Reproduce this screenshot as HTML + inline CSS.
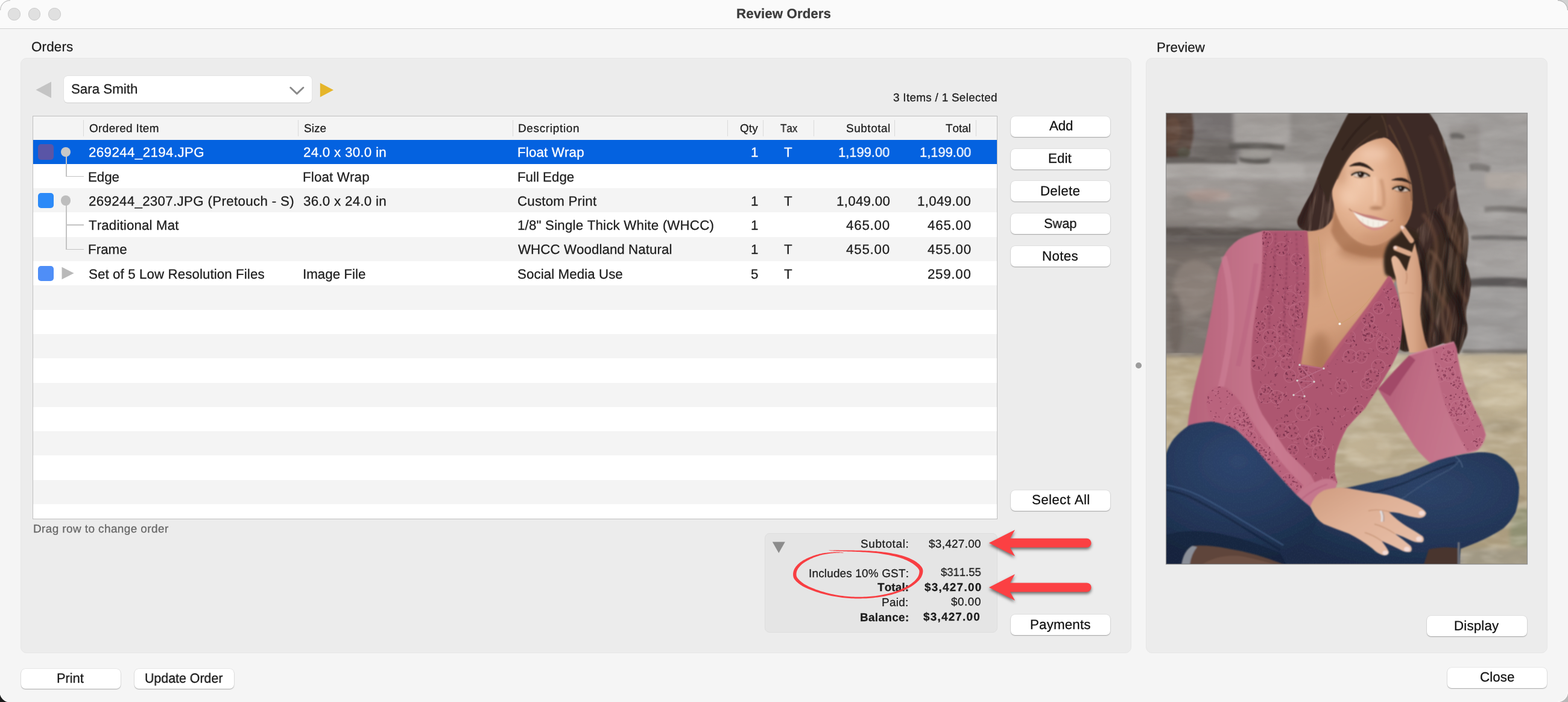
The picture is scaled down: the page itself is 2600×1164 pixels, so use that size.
<!DOCTYPE html>
<html lang="en">
<head>
<meta charset="utf-8">
<title>Review Orders</title>
<style>
html,body{margin:0;padding:0;}
body{width:2600px;height:1164px;background:#f5f5f5;font-family:"Liberation Sans",sans-serif;color:#1d1d1d;}
#win{position:relative;width:2600px;height:1164px;overflow:hidden;background:#f5f5f5;}
.b{position:absolute;box-sizing:border-box;}
.t{position:absolute;white-space:pre;line-height:30px;transform-origin:0 0;will-change:transform;text-rendering:geometricPrecision;font-kerning:none;-webkit-text-stroke:0.28px currentColor;}
.titlebar{background:#fafafa;border-bottom:1px solid #d2d2d2;}
.tl{border-radius:50%;background:#e0e0e0;border:1px solid #c9c9c9;}
.group{background:#ececec;border:1px solid #e6e6e6;border-radius:10px;}
.btn{background:#fff;border-radius:7px;box-shadow:0 0 0 0.5px rgba(0,0,0,0.10),0 1px 1.5px rgba(0,0,0,0.28);}
.combo{background:#fff;border-radius:6px;box-shadow:0 0 0 0.5px rgba(0,0,0,0.05),0 0.5px 1px rgba(0,0,0,0.10);}
.table{background:#fff;border:1px solid #bfbfbf;}
.hdr{background:#f4f4f4;}
.sep{background:#dadada;}
.alt{background:#f4f4f4;}
.sel{background:#0462e0;}
.sq{border-radius:5px;}
.dot{border-radius:50%;background:#bdbdbd;}
.ln{background:#c3c3c3;}
.sum{background:#e5e5e5;border:1px solid #dedede;border-radius:8px;}
svg{position:absolute;overflow:visible;}

</style>
</head>
<body>
<div id="win">
<header aria-label="Title bar">
<div class="b titlebar" style="left:0.00px;top:0.00px;width:2600.00px;height:48.00px;"></div>
<div class="b tl" style="left:13.20px;top:13.20px;width:20.40px;height:20.40px;"></div>
<div class="b tl" style="left:46.80px;top:13.20px;width:20.40px;height:20.40px;"></div>
<div class="b tl" style="left:80.40px;top:13.20px;width:20.40px;height:20.40px;"></div>
<div class="t" style="left:1220.81px;top:8px;font-size:22.30px;letter-spacing:0.069px;font-weight:700;color:#3b3b3b;">Review Orders</div>
</header>
<section aria-label="Orders">
<div class="t" style="left:51.94px;top:63px;font-size:22.30px;letter-spacing:0.202px;">Orders</div>
<div class="b group" style="left:33.90px;top:96.10px;width:1842.10px;height:987.00px;"></div>
<nav aria-label="Customer">
<svg style="left:59px;top:135px" width="27" height="29" viewBox="0 0 27 29"><path d="M26 0.6 L26 27.5 L0.4 14 Z" fill="#c4c4c4"/></svg>
<div class="b combo" style="left:105.50px;top:125.80px;width:411.90px;height:44.40px;"></div>
<div class="t" style="left:117.69px;top:133px;font-size:22.30px;">Sara Smith</div>
<svg style="left:478px;top:141px" width="30" height="20" viewBox="0 0 30 20"><path d="M3.700 4.200 L14.300 14.400 L24.900 4.200" fill="none" stroke="#8a8a8a" stroke-width="2.900" stroke-linecap="round" stroke-linejoin="round"/></svg>
<svg style="left:530px;top:137px" width="24" height="25" viewBox="0 0 24 25"><path d="M0.8 0.4 L23 12.2 L0.8 24 Z" fill="#e5b52a"/></svg>
</nav>
<div class="t" style="left:1481.48px;top:148px;font-size:18.90px;letter-spacing:0.295px;">3 Items / 1 Selected</div>
<div role="table" aria-label="Ordered items">
<div class="b table" style="left:54.00px;top:192.00px;width:1600.00px;height:669.00px;"></div>
<div class="b hdr" style="left:55.00px;top:193.00px;width:1598.00px;height:38.60px;"></div>
<div class="b sep" style="left:138.20px;top:199.20px;width:1.20px;height:27.20px;"></div>
<div class="b sep" style="left:494.20px;top:199.20px;width:1.20px;height:27.20px;"></div>
<div class="b sep" style="left:850.10px;top:199.20px;width:1.20px;height:27.20px;"></div>
<div class="b sep" style="left:1206.20px;top:199.20px;width:1.20px;height:27.20px;"></div>
<div class="b sep" style="left:1265.20px;top:199.20px;width:1.20px;height:27.20px;"></div>
<div class="b sep" style="left:1349.10px;top:199.20px;width:1.20px;height:27.20px;"></div>
<div class="b sep" style="left:1483.20px;top:199.20px;width:1.20px;height:27.20px;"></div>
<div class="b sep" style="left:1617.80px;top:199.20px;width:1.20px;height:27.20px;"></div>
<div role="row">
<div class="t" style="left:148.20px;top:199px;font-size:18.90px;letter-spacing:0.382px;">Ordered Item</div>
<div class="t" style="left:504.04px;top:199px;font-size:18.90px;letter-spacing:0.111px;">Size</div>
<div class="t" style="left:859.45px;top:199px;font-size:18.90px;letter-spacing:0.704px;">Description</div>
<div class="t" style="left:1226.70px;top:199px;font-size:18.90px;letter-spacing:0.165px;">Qty</div>
<div class="t" style="left:1294.22px;top:199px;font-size:18.90px;transform:scaleX(0.9003);">Tax</div>
<div class="t" style="left:1402.74px;top:199px;font-size:18.90px;letter-spacing:0.567px;">Subtotal</div>
<div class="t" style="left:1568.48px;top:199px;font-size:18.90px;letter-spacing:0.018px;">Total</div>
</div>
<div class="b sel" style="left:55.00px;top:231.60px;width:1598.00px;height:40.30px;"></div>
<div class="b alt" style="left:55.00px;top:312.20px;width:1598.00px;height:40.30px;"></div>
<div class="b alt" style="left:55.00px;top:392.80px;width:1598.00px;height:40.30px;"></div>
<div class="b alt" style="left:55.00px;top:473.40px;width:1598.00px;height:40.30px;"></div>
<div class="b alt" style="left:55.00px;top:554.00px;width:1598.00px;height:40.30px;"></div>
<div class="b alt" style="left:55.00px;top:634.60px;width:1598.00px;height:40.30px;"></div>
<div class="b alt" style="left:55.00px;top:715.20px;width:1598.00px;height:40.30px;"></div>
<div class="b alt" style="left:55.00px;top:795.80px;width:1598.00px;height:40.30px;"></div>
<div role="row" aria-selected="true">
<div class="t" style="left:147.08px;top:238px;font-size:22.30px;letter-spacing:0.407px;color:#ffffff;">269244_2194.JPG</div>
<div class="t" style="left:502.58px;top:238px;font-size:22.30px;letter-spacing:0.290px;color:#ffffff;">24.0 x 30.0 in</div>
<div class="t" style="left:857.67px;top:238px;font-size:22.30px;letter-spacing:0.168px;color:#ffffff;">Float Wrap</div>
<div class="t" style="left:1245.29px;top:238px;font-size:22.30px;color:#ffffff;">1</div>
<div class="t" style="left:1300.39px;top:238px;font-size:22.30px;color:#ffffff;">T</div>
<div class="t" style="left:1390.43px;top:238px;font-size:22.30px;color:#ffffff;transform:scaleX(0.9818);">1,199.00</div>
<div class="t" style="left:1524.93px;top:238px;font-size:22.30px;color:#ffffff;transform:scaleX(0.9818);">1,199.00</div>
</div>
<div role="row">
<div class="t" style="left:146.37px;top:279px;font-size:22.30px;letter-spacing:-0.053px;">Edge</div>
<div class="t" style="left:501.87px;top:279px;font-size:22.30px;letter-spacing:0.168px;">Float Wrap</div>
<div class="t" style="left:857.67px;top:279px;font-size:22.30px;">Full Edge</div>
</div>
<div role="row">
<div class="t" style="left:147.08px;top:319px;font-size:22.30px;letter-spacing:0.332px;">269244_2307.JPG (Pretouch - S)</div>
<div class="t" style="left:502.85px;top:319px;font-size:22.30px;letter-spacing:0.292px;">36.0 x 24.0 in</div>
<div class="t" style="left:858.37px;top:319px;font-size:22.30px;letter-spacing:0.202px;">Custom Print</div>
<div class="t" style="left:1245.29px;top:319px;font-size:22.30px;">1</div>
<div class="t" style="left:1300.39px;top:319px;font-size:22.30px;">T</div>
<div class="t" style="left:1386.80px;top:319px;font-size:22.30px;letter-spacing:0.295px;">1,049.00</div>
<div class="t" style="left:1521.30px;top:319px;font-size:22.30px;letter-spacing:0.295px;">1,049.00</div>
</div>
<div role="row">
<div class="t" style="left:147.00px;top:359px;font-size:22.30px;letter-spacing:0.141px;">Traditional Mat</div>
<div class="t" style="left:857.80px;top:359px;font-size:22.30px;letter-spacing:0.197px;">1/8&quot; Single Thick White (WHCC)</div>
<div class="t" style="left:1245.29px;top:359px;font-size:22.30px;">1</div>
<div class="t" style="left:1403.49px;top:359px;font-size:22.30px;letter-spacing:0.795px;">465.00</div>
<div class="t" style="left:1537.99px;top:359px;font-size:22.30px;letter-spacing:0.795px;">465.00</div>
</div>
<div role="row">
<div class="t" style="left:146.37px;top:399px;font-size:22.30px;letter-spacing:0.048px;">Frame</div>
<div class="t" style="left:859.40px;top:399px;font-size:22.30px;letter-spacing:0.067px;">WHCC Woodland Natural</div>
<div class="t" style="left:1245.29px;top:399px;font-size:22.30px;">1</div>
<div class="t" style="left:1300.39px;top:399px;font-size:22.30px;">T</div>
<div class="t" style="left:1403.49px;top:399px;font-size:22.30px;letter-spacing:0.795px;">455.00</div>
<div class="t" style="left:1537.99px;top:399px;font-size:22.30px;letter-spacing:0.795px;">455.00</div>
</div>
<div role="row">
<div class="t" style="left:147.19px;top:440px;font-size:22.30px;letter-spacing:0.100px;">Set of 5 Low Resolution Files</div>
<div class="t" style="left:501.64px;top:440px;font-size:22.30px;letter-spacing:0.027px;">Image File</div>
<div class="t" style="left:858.49px;top:440px;font-size:22.30px;letter-spacing:0.085px;">Social Media Use</div>
<div class="t" style="left:1245.13px;top:440px;font-size:22.30px;">5</div>
<div class="t" style="left:1300.39px;top:440px;font-size:22.30px;">T</div>
<div class="t" style="left:1538.38px;top:440px;font-size:22.30px;letter-spacing:0.717px;">259.00</div>
</div>
<div class="b sq" style="left:62.70px;top:239.00px;width:26.00px;height:25.90px;background:#5a55a6;"></div>
<div class="b sq" style="left:62.70px;top:319.60px;width:26.00px;height:25.90px;background:#2c8af8;"></div>
<div class="b sq" style="left:62.70px;top:440.50px;width:26.00px;height:25.90px;background:#4f8ef7;"></div>
<div class="b ln" style="left:109.20px;top:251.60px;width:1.60px;height:41.70px;"></div>
<div class="b ln" style="left:109.20px;top:291.70px;width:29.50px;height:1.60px;"></div>
<div class="b ln" style="left:109.20px;top:332.20px;width:1.60px;height:82.00px;"></div>
<div class="b ln" style="left:109.20px;top:372.30px;width:29.50px;height:1.60px;"></div>
<div class="b ln" style="left:109.20px;top:412.60px;width:29.50px;height:1.60px;"></div>
<div class="b dot" style="left:100.80px;top:243.50px;width:16.70px;height:16.70px;background:#c8c8c8;"></div>
<div class="b dot" style="left:100.80px;top:324.10px;width:16.70px;height:16.70px;background:#bdbdbd;"></div>
<svg style="left:102px;top:442.4px" width="22" height="22" viewBox="0 0 22 22"><path d="M0.5 0.8 L20.6 11 L0.5 21.2 Z" fill="#b9b9b9"/></svg>
</div>
<div class="t" style="left:54.95px;top:863px;font-size:18.90px;letter-spacing:0.433px;color:#666666;">Drag row to change order</div>
<div role="button" aria-label="Add">
<div class="b btn" style="left:1676.00px;top:192.80px;width:165.20px;height:34.00px;"></div>
<div class="t" style="left:1739.56px;top:194px;font-size:22.30px;letter-spacing:-0.099px;color:#111111;">Add</div>
</div>
<div role="button" aria-label="Edit">
<div class="b btn" style="left:1676.00px;top:246.58px;width:165.20px;height:34.00px;"></div>
<div class="t" style="left:1738.47px;top:248px;font-size:22.30px;letter-spacing:0.056px;color:#111111;">Edit</div>
</div>
<div role="button" aria-label="Delete">
<div class="b btn" style="left:1676.00px;top:300.36px;width:165.20px;height:34.00px;"></div>
<div class="t" style="left:1725.27px;top:302px;font-size:22.30px;letter-spacing:0.272px;color:#111111;">Delete</div>
</div>
<div role="button" aria-label="Swap">
<div class="b btn" style="left:1676.00px;top:354.14px;width:165.20px;height:34.00px;"></div>
<div class="t" style="left:1731.31px;top:356px;font-size:22.30px;color:#111111;transform:scaleX(0.9771);">Swap</div>
</div>
<div role="button" aria-label="Notes">
<div class="b btn" style="left:1676.00px;top:407.92px;width:165.20px;height:34.00px;"></div>
<div class="t" style="left:1728.27px;top:410px;font-size:22.30px;letter-spacing:0.345px;color:#111111;">Notes</div>
</div>
<div role="button" aria-label="Select All">
<div class="b btn" style="left:1676.00px;top:812.90px;width:165.20px;height:34.00px;"></div>
<div class="t" style="left:1710.69px;top:814px;font-size:22.30px;letter-spacing:0.372px;color:#111111;">Select All</div>
</div>
<div role="button" aria-label="Payments">
<div class="b btn" style="left:1676.00px;top:1019.30px;width:165.20px;height:33.90px;"></div>
<div class="t" style="left:1707.87px;top:1021px;font-size:22.30px;letter-spacing:0.183px;color:#111111;">Payments</div>
</div>
<div role="group" aria-label="Order totals">
<div class="b sum" style="left:1268.30px;top:884.00px;width:385.70px;height:165.30px;"></div>
<svg style="left:1280px;top:898px" width="23" height="20" viewBox="0 0 23 20"><path d="M0.8 0.6 L21.8 0.6 L11.3 19 Z" fill="#8c8c8c"/></svg>
<div class="t" style="left:1426.94px;top:888px;font-size:18.90px;letter-spacing:0.648px;">Subtotal:</div>
<div class="t" style="left:1540.30px;top:888px;font-size:18.90px;letter-spacing:0.308px;">$3,427.00</div>
<div class="t" style="left:1340.76px;top:937px;font-size:18.90px;letter-spacing:0.196px;">Includes 10% GST:</div>
<div class="t" style="left:1560.10px;top:935px;font-size:18.90px;transform:scaleX(0.9774);">$311.55</div>
<div class="t" style="left:1454.69px;top:960px;font-size:18.90px;letter-spacing:0.138px;font-weight:700;">Total:</div>
<div class="t" style="left:1532.65px;top:960px;font-size:18.90px;letter-spacing:1.268px;font-weight:700;">$3,427.00</div>
<div class="t" style="left:1462.35px;top:985px;font-size:18.90px;letter-spacing:0.324px;">Paid:</div>
<div class="t" style="left:1577.40px;top:984px;font-size:18.90px;letter-spacing:0.536px;">$0.00</div>
<div class="t" style="left:1425.54px;top:1010px;font-size:18.90px;letter-spacing:0.357px;font-weight:700;">Balance:</div>
<div class="t" style="left:1531.25px;top:1009px;font-size:18.90px;letter-spacing:1.218px;font-weight:700;">$3,427.00</div>
</div>
</section>
<div class="b dot" style="left:1882.60px;top:600.80px;width:10.20px;height:10.20px;background:#9c9c9c;"></div>
<section aria-label="Preview">
<div class="t" style="left:1917.67px;top:64px;font-size:22.30px;letter-spacing:0.077px;">Preview</div>
<div class="b group" style="left:1899.60px;top:96.10px;width:666.40px;height:987.00px;"></div>
<svg style="left:1933px;top:187px" width="600" height="749" viewBox="0 0 600 749" role="img" aria-label="Preview of 269244_2194.JPG">
<defs>
<clipPath id="pc"><rect x="0" y="0" width="600" height="749"/></clipPath>
<filter id="b05" x="-5%" y="-5%" width="110%" height="110%"><feGaussianBlur stdDeviation="0.55"/></filter>
<filter id="b1" x="-10%" y="-10%" width="120%" height="120%"><feGaussianBlur stdDeviation="0.9"/></filter>
<filter id="b2" x="-20%" y="-20%" width="140%" height="140%"><feGaussianBlur stdDeviation="2"/></filter>
<filter id="b3" x="-20%" y="-20%" width="140%" height="140%"><feGaussianBlur stdDeviation="3.500"/></filter>
<filter id="b6" x="-30%" y="-30%" width="160%" height="160%"><feGaussianBlur stdDeviation="7"/></filter>
<filter id="b12" x="-50%" y="-50%" width="200%" height="200%"><feGaussianBlur stdDeviation="12"/></filter>
<!-- organic texture: dark and light mottling -->
<filter id="nzD" x="0" y="0" width="100%" height="100%"><feTurbulence type="fractalNoise" baseFrequency="0.012 0.045" numOctaves="4" seed="7"/><feColorMatrix type="matrix" values="0 0 0 0 0.18  0 0 0 0 0.16  0 0 0 0 0.15  1.9 0 0 0 -0.78"/><feGaussianBlur stdDeviation="1.2"/></filter>
<filter id="nzL" x="0" y="0" width="100%" height="100%"><feTurbulence type="fractalNoise" baseFrequency="0.014 0.05" numOctaves="4" seed="23"/><feColorMatrix type="matrix" values="0 0 0 0 0.80  0 0 0 0 0.78  0 0 0 0 0.76  1.7 0 0 0 -0.72"/><feGaussianBlur stdDeviation="1.2"/></filter>
<filter id="nzG" x="0" y="0" width="100%" height="100%"><feTurbulence type="fractalNoise" baseFrequency="0.018 0.06" numOctaves="3" seed="41"/><feColorMatrix type="matrix" values="0 0 0 0 0.47  0 0 0 0 0.40  0 0 0 0 0.28  1.8 0 0 0 -0.75"/><feGaussianBlur stdDeviation="1.5"/></filter>
<filter id="nzGL" x="0" y="0" width="100%" height="100%"><feTurbulence type="fractalNoise" baseFrequency="0.02 0.07" numOctaves="3" seed="5"/><feColorMatrix type="matrix" values="0 0 0 0 0.87  0 0 0 0 0.82  0 0 0 0 0.70  1.6 0 0 0 -0.68"/><feGaussianBlur stdDeviation="1.5"/></filter>
<filter id="nzDenim" x="0" y="0" width="100%" height="100%"><feTurbulence type="fractalNoise" baseFrequency="0.5 0.35" numOctaves="2" seed="11"/><feColorMatrix type="matrix" values="0 0 0 0 0.55  0 0 0 0 0.68  0 0 0 0 0.90  0.55 0 0 0 -0.2"/></filter>
<filter id="nzHair" x="0" y="0" width="100%" height="100%"><feTurbulence type="fractalNoise" baseFrequency="0.11 0.012" numOctaves="3" seed="3"/><feColorMatrix type="matrix" values="0 0 0 0 0.52  0 0 0 0 0.36  0 0 0 0 0.27  2.2 0 0 0 -0.95"/><feGaussianBlur stdDeviation="0.7"/></filter>
<linearGradient id="gSlab" x1="0" y1="0" x2="0" y2="1"><stop offset="0" stop-color="#a9a5a2"/><stop offset="0.3" stop-color="#9d9895"/><stop offset="0.8" stop-color="#928c88"/><stop offset="1" stop-color="#7b7571"/></linearGradient>
<linearGradient id="gLowWall" x1="0" y1="0" x2="0" y2="1"><stop offset="0" stop-color="#595250"/><stop offset="0.14" stop-color="#736b65"/><stop offset="1" stop-color="#7f7670"/></linearGradient>
<linearGradient id="gGround" x1="0" y1="0" x2="0" y2="1"><stop offset="0" stop-color="#bfb196"/><stop offset="0.45" stop-color="#b6a789"/><stop offset="1" stop-color="#a8997b"/></linearGradient>
<linearGradient id="gHair" x1="0" y1="0" x2="1" y2="1"><stop offset="0" stop-color="#3a2a24"/><stop offset="0.5" stop-color="#3f2e27"/><stop offset="1" stop-color="#352620"/></linearGradient>
<radialGradient id="gFace" cx="0.34" cy="0.42" r="0.78"><stop offset="0" stop-color="#f1c8ab"/><stop offset="0.45" stop-color="#e2b08f"/><stop offset="0.8" stop-color="#cd9672"/><stop offset="1" stop-color="#b07857"/></radialGradient>
<linearGradient id="gChest" x1="0.2" y1="0" x2="0.5" y2="1"><stop offset="0" stop-color="#c78f6b"/><stop offset="0.3" stop-color="#dba988"/><stop offset="0.7" stop-color="#d4a07e"/><stop offset="1" stop-color="#b37c5b"/></linearGradient>
<linearGradient id="gSleeveL" x1="0" y1="0" x2="1" y2="0"><stop offset="0" stop-color="#b6627a"/><stop offset="0.4" stop-color="#c97a90"/><stop offset="0.8" stop-color="#be6b83"/><stop offset="1" stop-color="#b05c76"/></linearGradient>
<linearGradient id="gSleeveR" x1="0" y1="0" x2="1" y2="0.3"><stop offset="0" stop-color="#ab5772"/><stop offset="0.45" stop-color="#c06d85"/><stop offset="1" stop-color="#c87a90"/></linearGradient>
<radialGradient id="gKneeL" cx="0.40" cy="0.28" r="0.75"><stop offset="0" stop-color="#2e456d"/><stop offset="0.5" stop-color="#25395c"/><stop offset="1" stop-color="#192945"/></radialGradient>
<radialGradient id="gKneeR" cx="0.62" cy="0.32" r="0.8"><stop offset="0" stop-color="#2d4368"/><stop offset="0.5" stop-color="#243759"/><stop offset="1" stop-color="#1a2a46"/></radialGradient>
<linearGradient id="gHand" x1="0" y1="0" x2="1" y2="1"><stop offset="0" stop-color="#cf9c80"/><stop offset="0.45" stop-color="#e0b298"/><stop offset="1" stop-color="#e8c0aa"/></linearGradient>
<linearGradient id="gHandF" x1="0" y1="0" x2="1" y2="0"><stop offset="0" stop-color="#e6b89c"/><stop offset="0.6" stop-color="#d7a485"/><stop offset="1" stop-color="#b98262"/></linearGradient>
<clipPath id="cHair"><path id="pHair" d="M304 0 Q294 18 287 33 Q275 56 265 76 Q253 104 243 130 Q230 152 222 169 Q216 178 219 186 Q223 194 232 196 L264 200 L300 140 L380 140 L392 260 L386 330 L388 392 Q398 400 408 392 Q414 384 420 382 Q430 390 439 391 Q448 386 460 382 Q468 384 473 389 Q480 398 486 400 Q490 392 495 378 Q502 366 500 352 Q496 338 499 322 Q505 304 506 283 Q504 266 498 250 Q500 238 501 225 Q503 208 500 192 Q494 178 488 163 Q484 146 482 130 Q479 108 475 87 Q468 64 460 43 Q450 20 436 0 Z"/></clipPath>
<clipPath id="cLace"><path id="pLace" d="M160 196 L232 196 Q237 250 234 315 Q228 380 221 417 L262 424 Q300 371 340 318 L372 272 Q382 290 387 315 Q392 340 391 358 Q390 376 387 391 Q378 414 365 434 Q358 446 352 456 Q340 474 330 490 Q314 506 300 522 Q288 544 282 565 Q279 582 280 598 L284 613 L262 640 L240 600 L200 560 L160 500 Q140 460 141 423 Q142 380 146 350 Q150 320 156 290 Q162 250 160 196 Z"/></clipPath>
<clipPath id="cJeans"><path d="M0 566 Q6 550 13 541 Q24 528 39 518 Q56 513 76 512 Q98 515 117 526 Q134 541 152 561 Q168 580 184 598 Q200 616 217 634 Q228 644 238 652 Q250 664 262 682 L262 640 Q282 628 300 622 Q344 612 387 602 Q420 590 452 576 Q486 566 517 563 Q534 562 549 567 Q566 576 577 591 Q585 606 586 621 Q586 644 580 663 Q572 678 560 689 Q540 702 517 712 Q502 718 489 723 L486 749 L0 749 Z"/></clipPath>
<clipPath id="cBandL"><path d="M69 468 Q82 448 100 456 Q118 468 134 496 Q152 528 178 562 Q202 594 228 618 L216 634 L184 600 L150 562 L120 528 L84 520 Q64 500 69 468 Z"/></clipPath>
<clipPath id="cBandR"><path d="M442 392 Q460 384 478 382 Q484 392 484 406 Q488 428 494 448 Q504 476 516 500 Q526 516 530 534 Q526 550 516 558 L500 562 Q476 520 462 480 Q450 440 442 392 Z"/></clipPath>
<clipPath id="cWall"><rect x="0" y="0" width="600" height="404"/></clipPath>
<clipPath id="cGround"><rect x="0" y="398" width="600" height="351"/></clipPath>
</defs>
<g clip-path="url(#pc)">
<!-- ===== background wall ===== -->
<rect width="600" height="749" fill="#8f8b88"/>
<g filter="url(#b3)">
  <rect x="-20" y="-20" width="140" height="104" fill="#747070"/>
  <rect x="112" y="-20" width="100" height="72" fill="#a39f9c"/>
  <rect x="206" y="-20" width="100" height="104" fill="#8f8b88"/>
  <rect x="44" y="44" width="70" height="36" fill="#6a6562"/>
  <rect x="-20" y="82" width="290" height="112" fill="url(#gSlab)"/>
  <rect x="-20" y="82" width="250" height="26" fill="#aeaaa7"/>
  <ellipse cx="70" cy="137" rx="38" ry="10" fill="#a9968f"/>
  <ellipse cx="130" cy="166" rx="26" ry="11" fill="#a5a19d"/>
  <ellipse cx="26" cy="150" rx="20" ry="14" fill="#8c8783"/>
  <ellipse cx="180" cy="130" rx="30" ry="14" fill="#96918d"/>
  <rect x="-20" y="204" width="150" height="204" fill="url(#gLowWall)"/>
  <ellipse cx="50" cy="290" rx="38" ry="46" fill="#8a7f78"/>
  <ellipse cx="16" cy="350" rx="12" ry="50" fill="#6f6661"/>
  <ellipse cx="70" cy="370" rx="26" ry="30" fill="#7e756f"/>
  <rect x="440" y="-20" width="180" height="424" fill="#a19e9c"/>
  <rect x="530" y="100" width="90" height="26" fill="#b0a9a3"/>
  <rect x="500" y="292" width="120" height="104" fill="#9d9b9a"/>
  <rect x="470" y="20" width="50" height="60" fill="#96928f"/>
  <rect x="510" y="220" width="100" height="50" fill="#a6a3a1"/>
</g>
<g filter="url(#b2)">
  <path d="M-5 -5 L42 -5 Q50 30 42 58 Q34 80 -5 82 Z" fill="#4f3a30"/>
  <ellipse cx="12" cy="30" rx="13" ry="24" fill="#5c4335"/>
  <ellipse cx="30" cy="66" rx="11" ry="9" fill="#4b473b"/>
  <path d="M104 51 Q150 47 198 54 L196 62 Q150 58 106 61 Z" fill="#5a5653"/>
  <path d="M121 73 Q148 80 174 74 L172 83 Q148 87 123 81 Z" fill="#5c5855"/>
  <path d="M126 62 Q150 60 176 63 L175 73 Q150 76 127 72 Z" fill="#9a9692"/>
  <path d="M-5 74 Q60 72 118 78 L118 84 Q60 82 -5 84 Z" fill="#625d5a"/>
  <path d="M-5 190 Q100 188 228 194 L228 207 Q100 203 -5 206 Z" fill="#5b5551"/>
  <path d="M471 35 Q484 31 496 38 L494 44 Q484 41 473 43 Z" fill="#6b6765"/>
  <path d="M503 85 Q522 81 539 89 L536 98 Q521 94 505 96 Z" fill="#76726f"/>
  <path d="M528 156 Q560 152 605 158 L605 167 Q560 163 529 165 Z" fill="#76726f"/>
  <path d="M506 204 Q550 201 605 206 L605 212 Q550 209 507 211 Z" fill="#6c6967"/>
  <path d="M500 276 Q550 270 605 276 L605 290 Q550 286 502 289 Z" fill="#5a5756"/>
  <rect x="492" y="393" width="115" height="8" fill="#6a6765"/>
</g>
<rect x="0" y="0" width="600" height="404" filter="url(#nzD)" clip-path="url(#cWall)" opacity="0.26"/>
<rect x="0" y="0" width="600" height="404" filter="url(#nzL)" clip-path="url(#cWall)" opacity="0.20"/>
<!-- ===== ground ===== -->
<g filter="url(#b3)">
  <rect x="-10" y="404" width="120" height="175" fill="#b5a584"/>
  <rect x="262" y="400" width="350" height="330" fill="url(#gGround)"/>
  <ellipse cx="470" cy="428" rx="100" ry="16" fill="#c9bb9f"/>
  <ellipse cx="560" cy="468" rx="44" ry="26" fill="#c7b99b"/>
  <ellipse cx="335" cy="560" rx="40" ry="24" fill="#c1b294"/>
  <ellipse cx="555" cy="520" rx="36" ry="10" fill="#a39478"/>
  <ellipse cx="560" cy="640" rx="40" ry="10" fill="#a19276"/>
  <ellipse cx="592" cy="700" rx="22" ry="48" fill="#8f9072"/>
  <rect x="490" y="722" width="120" height="40" fill="#a09884"/>
</g>
<rect x="0" y="398" width="600" height="351" filter="url(#nzG)" clip-path="url(#cGround)" opacity="0.5"/>
<rect x="0" y="398" width="600" height="351" filter="url(#nzGL)" clip-path="url(#cGround)" opacity="0.5"/>
<!-- ===== hair (back mass) ===== -->
<use href="#pHair" fill="url(#gHair)" filter="url(#b1)"/>
<g clip-path="url(#cHair)"><rect x="180" y="-40" width="380" height="480" filter="url(#nzHair)" opacity="0.42" transform="rotate(7 420 200)"/></g>
<g fill="none" stroke-linecap="round" filter="url(#b2)" clip-path="url(#cHair)">
  <path d="M470 210 Q500 240 492 280 Q480 310 494 350" stroke="#1f1511" stroke-width="7" opacity="0.7"/>
  <path d="M440 230 Q470 260 462 300 Q452 340 470 380" stroke="#7b5a47" stroke-width="6" opacity="0.6"/>
  <path d="M420 250 Q440 290 436 330 Q430 360 440 386" stroke="#1f1511" stroke-width="8" opacity="0.7"/>
  <path d="M455 150 Q470 200 488 230" stroke="#6a4a3a" stroke-width="5" opacity="0.55"/>
  <path d="M428 40 Q456 100 462 160" stroke="#23181300" stroke-width="6" opacity="0.6"/>
  <path d="M296 30 Q270 80 246 130 Q230 160 224 184" stroke="#251915" stroke-width="7" opacity="0.6"/>
  <path d="M402 330 Q396 360 400 392" stroke="#1f1511" stroke-width="8" opacity="0.7"/>
</g>
<!-- ===== neck / chest ===== -->
<path d="M280 150 L392 180 L385 272 L340 340 L262 426 L220 420 L228 380 L234 315 L236 250 L232 197 Q250 196 260 192 Q272 185 277 174 Q280 162 280 150 Z" fill="url(#gChest)" filter="url(#b1)"/>
<ellipse cx="336" cy="228" rx="50" ry="16" fill="#a8714f" opacity="0.6" filter="url(#b6)"/>
<ellipse cx="256" cy="398" rx="16" ry="34" fill="#a06c4c" opacity="0.55" filter="url(#b6)"/>
<ellipse cx="250" cy="260" rx="10" ry="50" fill="#c08a68" opacity="0.5" filter="url(#b6)"/>
<path d="M253 205 Q262 300 289 350 Q320 335 346 298" fill="none" stroke="#c7a062" stroke-width="0.8" opacity="0.85"/>
<circle cx="288.500" cy="350" r="2.100" fill="#f6f3ee"/>
<path d="M278 150 Q281 168 291 186 Q304 206 326 218 Q344 224 360 216 Q380 204 394 190 L392 236 Q340 248 296 228 Q280 214 274 196 Q279 176 279 150 Z" fill="#a8714f" opacity="0.7" filter="url(#b2)"/>
<!-- ===== face ===== -->
<path d="M363 41 Q344 43 323 54 Q308 66 299 80 Q291 94 286 106 Q279 118 276 128 Q275 138 278 148 Q281 166 291 184 Q300 198 312 208 Q324 218 341 220 Q356 220 373 206 Q384 198 395 189 Q406 178 409 160 Q411 141 408 118 Q402 92 393 73 Q385 58 374 47 Q369 42 363 41 Z" fill="url(#gFace)" filter="url(#b1)"/>
<g filter="url(#b6)">
  <ellipse cx="400" cy="146" rx="9" ry="38" fill="#9c6645" opacity="0.5"/>
  <ellipse cx="345" cy="68" rx="24" ry="12" fill="#f7d6be" opacity="0.55"/>
  <ellipse cx="304" cy="140" rx="14" ry="14" fill="#f5d0b6" opacity="0.6"/>
  <ellipse cx="290" cy="100" rx="8" ry="20" fill="#b78060" opacity="0.45"/>
  <ellipse cx="344" cy="208" rx="22" ry="7" fill="#c9926f" opacity="0.5"/>
</g>
<g filter="url(#b2)">
  <path d="M357 110 Q364 134 361 156" fill="none" stroke="#b47c5a" stroke-width="5" opacity="0.5"/>
  <path d="M346 106 Q348 130 347 148" fill="none" stroke="#f6d4bb" stroke-width="4" opacity="0.6"/>
  <ellipse cx="349" cy="158" rx="11" ry="3" fill="#96603f" opacity="0.6"/>
  <path d="M306 100 Q322 92 338 104" fill="none" stroke="#8a5a3e" stroke-width="4" opacity="0.35"/>
  <path d="M376 124 Q390 116 405 128" fill="none" stroke="#8a5a3e" stroke-width="4" opacity="0.35"/>
</g>
<g filter="url(#b1)">
  <path d="M305 88.500 Q313 82.500 322 82.500 Q334 84 344 96 Q334 89.500 322 87.500 Q313 87 305 88.500 Z" fill="#2f211b" stroke="#2f211b" stroke-width="1.200" stroke-linejoin="round"/>
  <path d="M375 111.500 Q384 107.500 392 108.500 Q401 110.500 408 118 Q400 114 391 112.500 Q383 111.500 375 111.500 Z" fill="#2f211b" stroke="#2f211b" stroke-width="1.100" stroke-linejoin="round"/>
  <path d="M310 103 Q322 95.500 336 104.500 Q323 109.500 310 103 Z" fill="#dccdc3"/>
  <ellipse cx="323.500" cy="102.400" rx="5.600" ry="4.800" fill="#2a1a14"/>
  <path d="M308.500 103 Q322 94 337.500 104.500" fill="none" stroke="#1e1410" stroke-width="2.600" stroke-linecap="round"/>
  <path d="M312 105.500 Q323 110.500 335 105.500" fill="none" stroke="#6b4633" stroke-width="1" opacity="0.7"/>
  <path d="M378 126 Q390 119 403 129 Q390 133 378 126 Z" fill="#d6c7bd"/>
  <ellipse cx="390.500" cy="125.800" rx="5.400" ry="4.600" fill="#2a1a14"/>
  <path d="M376.500 126 Q390 117.500 404.500 129" fill="none" stroke="#1e1410" stroke-width="2.500" stroke-linecap="round"/>
  <path d="M380 128.500 Q390 133.500 402 130.500" fill="none" stroke="#6b4633" stroke-width="1" opacity="0.7"/>
  <circle cx="322" cy="101" r="1" fill="#ffffff" opacity="0.9"/><circle cx="389" cy="124.500" r="1" fill="#ffffff" opacity="0.9"/>
  <path d="M308 162 Q320 166.500 332 169 Q340 169.500 346 171.500 Q358 175 372 179.500 Q356 182 342 179.500 Q324 175 308 162 Z" fill="#c4807a"/>
  <path d="M311 164.500 Q326 172.500 343 176.500 Q358 179.500 369.500 180 Q360 191 344 190 Q324 186.500 311 164.500 Z" fill="#f5f0e7"/>
  <path d="M313 169 Q324 190 344 195 Q360 195.500 371 181 Q360 191.500 344 190.500 Q326 188 313 169 Z" fill="#d6928b"/>
  <path d="M326 175 L327.500 184 M335 177.500 L335.500 187 M344 179.500 L344 189 M353 180.500 L352.500 189.500 M361 181 L360 188" stroke="#d9cfc2" stroke-width="0.700" fill="none"/>
  <path d="M304 159 Q306 162 309 163 M372 180 Q375 180 377 177" stroke="#a56c50" stroke-width="1.400" fill="none" opacity="0.8"/>
</g>
<circle cx="273.500" cy="120" r="2.100" fill="#f4f1ec"/>
<!-- ===== hair (front, over right side of face and left temple) ===== -->
<g filter="url(#b1)">
<path d="M362 40 Q369 41 374 47 Q385 58 393 73 Q402 92 408 118 Q411 141 409 160 Q406 178 396 190 L400 198 Q420 196 432 176 L480 120 L450 20 L436 0 L356 0 Z" fill="#3c2b25"/>
<path d="M304 0 Q294 18 287 33 Q275 56 265 76 Q258 94 252 110 L270 150 Q272 132 279 118 Q286 104 291 94 Q299 80 308 66 Q323 54 344 43 Q354 40 364 40 L366 0 Z" fill="#3a2a23"/>
<path d="M358 4 Q366 20 368 40" fill="none" stroke="#5d4335" stroke-width="2" opacity="0.7"/>
<path d="M370 20 Q388 52 398 88 Q406 116 408 146" fill="none" stroke="#6b4a3a" stroke-width="3" opacity="0.5"/>
<path d="M384 6 Q410 50 422 100 Q430 140 436 170" fill="none" stroke="#5c4033" stroke-width="4" opacity="0.5"/>
<path d="M352 30 Q326 44 308 66 Q294 86 284 110" fill="none" stroke="#5a3f32" stroke-width="3" opacity="0.5"/>
<path d="M340 6 Q312 30 292 62" fill="none" stroke="#241813" stroke-width="4" opacity="0.4"/>
</g>
<!-- dark hair falling between neck and hand -->
<path d="M397 189 Q386 202 374 210 Q365 220 362 236 Q360 254 364 268 L376 276 L396 280 L416 262 L420 200 Z" fill="#35251f" filter="url(#b2)"/>
<!-- soft waves in the long hair -->
<g fill="none" stroke-linecap="round" filter="url(#b2)" clip-path="url(#cHair)">
  <path d="M428 170 Q456 205 446 245 Q436 282 460 312 Q482 342 464 382" stroke="#6d4d3b" stroke-width="7" opacity="0.55"/>
  <path d="M446 165 Q474 200 466 240 Q456 280 480 310 Q500 340 482 384" stroke="#221612" stroke-width="7" opacity="0.6"/>
  <path d="M466 172 Q494 206 486 246 Q478 282 498 312" stroke="#6d4d3b" stroke-width="6" opacity="0.5"/>
  <path d="M416 214 Q436 250 428 286 Q422 322 444 352 Q458 372 448 394" stroke="#221612" stroke-width="8" opacity="0.6"/>
  <path d="M432 300 Q448 330 440 360 Q436 380 440 392" stroke="#7a5845" stroke-width="5" opacity="0.5"/>
  <path d="M440 40 Q462 90 470 140" stroke="#5f4334" stroke-width="6" opacity="0.45"/>
</g>
<!-- ===== hand at face ===== -->
<g filter="url(#b1)">
<path d="M404 398 Q400 382 398 370 Q394 352 391 334 Q388 316 386 300 Q383 286 381 272 Q376 256 374 244 Q374 237 380 237 Q386 240 391 250 Q395 258 399 263 Q402 250 406 238 L413 216 Q419 240 423 262 Q426 284 424 304 Q422 322 422 334 Q424 352 430 377 Q434 388 438 398 Z" fill="url(#gHandF)"/>
<path d="M393.500 192 L407.500 212" fill="none" stroke="#d9a686" stroke-width="8.500" stroke-linecap="round"/>
<path d="M381.500 224.500 L404 233.500" fill="none" stroke="#ddab8c" stroke-width="8.500" stroke-linecap="round"/>
<path d="M399 264 Q401 274 398 284" fill="none" stroke="#b98262" stroke-width="1.600" opacity="0.7"/>
<path d="M386 300 Q400 296 412 300" fill="none" stroke="#c18a69" stroke-width="1.200" opacity="0.5"/>
<ellipse cx="392" cy="190" rx="2.600" ry="3.300" fill="#f1d5cd" transform="rotate(-35 392 190)"/>
<ellipse cx="380.500" cy="223.500" rx="2.500" ry="3.200" fill="#f1d5cd" transform="rotate(-68 380.500 223.500)"/>
</g>
<!-- ===== blouse ===== -->
<g filter="url(#b1)">
<path d="M232 196 L160 196 Q138 202 121 210 Q104 222 96 238 Q88 256 84 280 Q78 320 72 348 Q66 380 61 402 Q54 430 50 445 Q44 470 41 488 Q37 508 36 524 L120 526 L184 598 L217 634 L238 652 L262 642 L284 613 L280 598 Q279 582 282 565 Q288 544 300 522 Q314 506 330 490 Q340 474 352 456 Q358 446 365 434 Q378 414 387 391 Q390 376 391 358 Q392 340 387 315 Q382 290 372 272 Q340 320 300 371 Q280 396 262 424 L221 417 Q228 380 234 315 Q237 250 232 196 Z" fill="url(#gSleeveL)"/>
<path d="M96 238 Q112 300 108 360 Q100 430 80 500" fill="none" stroke="#d3889d" stroke-width="10" opacity="0.45"/>
<path d="M150 250 Q140 330 120 420" fill="none" stroke="#b45c7a" stroke-width="8" opacity="0.35"/>
</g>
<use href="#pLace" fill="#ad5670" filter="url(#b1)"/>
<g clip-path="url(#cLace)" filter="url(#b05)">
<path d="M151.5 208.6 a12.9 12.9 0 1 0 25.9 0 a12.9 12.9 0 1 0 -25.9 0 M215 496.5 a12.5 12.5 0 1 0 24.9 0 a12.5 12.5 0 1 0 -24.9 0 M341.1 420.3 a11.4 11.4 0 1 0 22.8 0 a11.4 11.4 0 1 0 -22.8 0 M314.5 404.4 a9.7 9.7 0 1 0 19.3 0 a9.7 9.7 0 1 0 -19.3 0 M218.6 442.2 a13.6 13.6 0 1 0 27.2 0 a13.6 13.6 0 1 0 -27.2 0 M154 203.4 a7.8 7.8 0 1 0 15.7 0 a7.8 7.8 0 1 0 -15.7 0 M193.3 308.5 a12.3 12.3 0 1 0 24.6 0 a12.3 12.3 0 1 0 -24.6 0 M291.8 371.3 a11.3 11.3 0 1 0 22.6 0 a11.3 11.3 0 1 0 -22.6 0 M243.1 563.6 a13.1 13.1 0 1 0 26.3 0 a13.1 13.1 0 1 0 -26.3 0 M213.8 290.6 a11.9 11.9 0 1 0 23.9 0 a11.9 11.9 0 1 0 -23.9 0 M212.9 325.3 a13.1 13.1 0 1 0 26.3 0 a13.1 13.1 0 1 0 -26.3 0 M271.5 606.7 a10.6 10.6 0 1 0 21.2 0 a10.6 10.6 0 1 0 -21.2 0 M329.8 437.1 a12.8 12.8 0 1 0 25.6 0 a12.8 12.8 0 1 0 -25.6 0 M196.1 436.5 a9.7 9.7 0 1 0 19.3 0 a9.7 9.7 0 1 0 -19.3 0 M153.5 467.5 a12.8 12.8 0 1 0 25.5 0 a12.8 12.8 0 1 0 -25.5 0 M324.5 341.7 a10.9 10.9 0 1 0 21.8 0 a10.9 10.9 0 1 0 -21.8 0 M310.4 492.5 a9.3 9.3 0 1 0 18.6 0 a9.3 9.3 0 1 0 -18.6 0 M148 353.6 a8.6 8.6 0 1 0 17.2 0 a8.6 8.6 0 1 0 -17.2 0 M189.9 415.8 a10.7 10.7 0 1 0 21.4 0 a10.7 10.7 0 1 0 -21.4 0 M204.5 329 a11.2 11.2 0 1 0 22.3 0 a11.2 11.2 0 1 0 -22.3 0 M219.2 424.7 a8.8 8.8 0 1 0 17.5 0 a8.8 8.8 0 1 0 -17.5 0 M161.2 327.2 a9.3 9.3 0 1 0 18.6 0 a9.3 9.3 0 1 0 -18.6 0 M323.1 449.3 a10.1 10.1 0 1 0 20.3 0 a10.1 10.1 0 1 0 -20.3 0 M228.9 543.7 a12 12 0 1 0 24 0 a12 12 0 1 0 -24 0 M172.5 471.3 a11 11 0 1 0 22.1 0 a11 11 0 1 0 -22.1 0 M326.3 372.4 a9.4 9.4 0 1 0 18.9 0 a9.4 9.4 0 1 0 -18.9 0 M157.5 458.2 a8.2 8.2 0 1 0 16.4 0 a8.2 8.2 0 1 0 -16.4 0 M294.5 403.8 a11.2 11.2 0 1 0 22.4 0 a11.2 11.2 0 1 0 -22.4 0 M236.3 534.1 a12.6 12.6 0 1 0 25.2 0 a12.6 12.6 0 1 0 -25.2 0 M207.2 243.2 a10.2 10.2 0 1 0 20.4 0 a10.2 10.2 0 1 0 -20.4 0 M186.9 395.7 a12.4 12.4 0 1 0 24.8 0 a12.4 12.4 0 1 0 -24.8 0 M344 323.5 a9 9 0 1 0 17.9 0 a9 9 0 1 0 -17.9 0 M201.9 558.8 a8.9 8.9 0 1 0 17.9 0 a8.9 8.9 0 1 0 -17.9 0 M349.2 384.3 a11.9 11.9 0 1 0 23.7 0 a11.9 11.9 0 1 0 -23.7 0 M160.9 371.5 a12.1 12.1 0 1 0 24.3 0 a12.1 12.1 0 1 0 -24.3 0 M210.9 346.4 a12.6 12.6 0 1 0 25.2 0 a12.6 12.6 0 1 0 -25.2 0 M198.2 528.4 a11 11 0 1 0 21.9 0 a11 11 0 1 0 -21.9 0 M140.1 414.5 a13 13 0 1 0 26.1 0 a13 13 0 1 0 -26.1 0 M180.8 225.6 a11.3 11.3 0 1 0 22.6 0 a11.3 11.3 0 1 0 -22.6 0 M178.8 527.6 a12.5 12.5 0 1 0 25.1 0 a12.5 12.5 0 1 0 -25.1 0 M281.1 454 a10.6 10.6 0 1 0 21.1 0 a10.6 10.6 0 1 0 -21.1 0 M327.6 361.4 a12.4 12.4 0 1 0 24.8 0 a12.4 12.4 0 1 0 -24.8 0 M238.6 541 a10.8 10.8 0 1 0 21.5 0 a10.8 10.8 0 1 0 -21.5 0 M160 394.6 a12 12 0 1 0 24 0 a12 12 0 1 0 -24 0 M372.1 314.8 a11.1 11.1 0 1 0 22.2 0 a11.1 11.1 0 1 0 -22.2 0 M183.9 359.3 a10.7 10.7 0 1 0 21.3 0 a10.7 10.7 0 1 0 -21.3 0 M205.1 235.1 q-2.1 -3.3 -6 -2.5 M222.9 539.6 q0.9 -5.3 -3.8 -8.1 M226.3 462.9 q2.8 -0.1 3.8 -2.8 M216 306.5 q1.8 -4.1 -1.4 -7.3 M164.5 342 q3.5 -2.6 2.4 -6.8 M358.6 375.9 q3.2 0.6 5 -2.2 M195.8 330.4 q-4 -0.8 -6.2 2.7 M231.8 442.6 q0.5 -2.8 -2 -4.4 M360.8 292 q3.3 -1.2 3.4 -4.8 M255.9 542 q-2.5 -1 -4.4 1.1 M329.5 347.5 q0.6 -5 -3.9 -7.5 M184 481.4 q3.5 -0.2 4.7 -3.6 M264.2 539.3 q-2.8 -1.6 -5.3 0.4 M185.8 490.1 q-1.7 -3.6 -5.6 -3.4 M163.4 238 q3.6 -1.1 4 -4.9 M279.5 506.3 q0.1 4.1 4 5.6 M296.5 520.6 q-1.3 -2.1 -3.7 -1.6 M285.4 441.9 q0.2 -2.5 -2.1 -3.6 M175.4 461 q-1.4 4.4 2.2 7.3 M193.2 401.8 q-4.1 -1 -6.7 2.5 M202.5 288.3 q4.2 1.2 6.9 -2.4 M371.3 419.3 q-3.7 -2.3 -7.3 0.3 M225.1 304.1 q-0.5 3.9 3 5.8 M258.7 611 q2.7 -4 -0.1 -8 M290 442.8 q4 2.7 8 -0.1 M366.6 345.5 q2.6 -0.1 3.5 -2.7 M231.2 260.9 q-3.3 0.9 -3.6 4.4 M379.1 379.7 q-2.7 2.8 -1.1 6.3 M366.8 299.4 q-0.7 2.5 1.4 4 M381.6 344.7 q2.2 1.2 4.1 -0.5 M204.3 441.1 q-2.2 -2.1 -5 -0.9 M187.9 472.6 q2 1.8 4.5 0.6 M297.4 491.1 q-0.1 -3 -3 -4 M309.9 428.9 q3.6 3 7.8 0.7 M369.9 309.6 q-1.9 -4.4 -6.7 -4.2 M161.4 249.2 q-3.4 -0.1 -4.8 3.1 M207.2 361.5 q-1.9 1.7 -1.1 4.1 M362.1 292.9 q3.2 2.4 6.7 0.4 M195.6 274.4 q2.6 -1.2 2.4 -4.1 M170.8 285.9 q-2.3 2.1 -1.2 5.1 M189.7 351.4 q0.4 -2.6 -1.9 -4 M174.8 231.4 q-2.4 -1.1 -4.3 0.7 M179.5 352.8 q-0.8 3.9 2.6 6.2 M198.9 325 q2.8 -0.3 3.6 -3 M356.7 391.1 q1.5 2.6 4.5 2.3 M193.1 268.6 q0.8 -2.9 -1.7 -4.8 M368.1 296.3 q2.3 1.8 4.8 0.4 M359.5 371.8 q-0.2 -2.6 -2.8 -3.4 M351.2 359.5 q1.9 4.3 6.6 4.1 M230.3 267.7 q3.4 -2.3 2.4 -6.4 M324.6 470.5 q1.1 -2.5 -0.8 -4.4 M186.5 395.3 q-5.1 0.5 -6.6 5.5 M334.9 443.1 q-2.9 1.7 -2.4 5.2 M315.8 384.8 q-4.5 0.5 -5.8 4.9 M216.4 512.3 q-3.2 -1.9 -6.2 0.4 M367.8 335.2 q5.3 -0.1 7.2 -5.1 M157.5 467.4 q-4.6 1.6 -4.8 6.5 M231.1 257.2 q-2.8 -1.1 -4.8 1.2 M189.9 260.3 q1.1 2.7 4 2.7 M232 222.7 q0.1 2.5 2.4 3.3 M173.5 324 q-3.9 -1.7 -6.9 1.3 M298 493.6 q2.8 1.8 5.6 -0.1 M163.4 352.7 q2.2 -1.4 1.7 -4 M185.7 296.3 q-1.2 2.9 1.1 5.2 M333 398.9 q-3.3 2.7 -2 6.8 M191.2 344.3 q-0.3 -4.2 -4.3 -5.5 M364.5 388.3 q3.6 -0.8 4.2 -4.5 M254.5 529.1 q-1.2 -2.5 -4 -2.3 M203.5 213.6 q3.7 -1.9 3.3 -6.1 M229.8 429.6 q3.1 1.1 5.3 -1.5 M218.7 293.6 q2.5 4.2 7.4 3.4 M201.8 291.1 q3.1 3.9 8 2.5 M219.9 489.8 q4.3 0 5.9 -4 M184.2 432.3 q-1.9 -3.5 -5.8 -3.1 M273.5 432.8 q-0.9 -3.9 -4.9 -4.5 M208.9 215.7 q-1.5 -2.6 -4.5 -2.1 M156.9 346 q3 0.9 5.1 -1.6 M210.7 315.3 q3.1 -0.6 3.6 -3.7 M382.9 349.5 q0 2.9 2.8 4 M161.3 214.1 q2.8 -1.3 2.7 -4.4 M383.8 390.4 q-3.7 -0.5 -5.6 2.8 M197.4 204.9 q2.8 -3.1 0.9 -6.9 M248.8 597.8 q-3.3 1.2 -3.5 4.7 M199.3 469.7 q2.4 -3.6 -0 -7.2 M336 432.3 q-1.5 -3.4 -5.2 -3.3 M210.6 515.8 q-2.7 0.3 -3.4 3 M344.2 394.3 q-2.7 -4.3 -7.7 -3.4 M222 397.2 q2.6 -0.2 3.5 -2.7 M351.5 403.8 q2.3 -1.4 1.8 -4.1 M180.8 450.9 q-3.7 -3 -8 -0.6 M169.5 308.1 q-0.8 -3 -3.9 -3.4 M351 355.3 q-2.3 3.3 -0 6.6 M324.9 363 q1.7 -2.1 0.4 -4.4 M340.9 318.5 q-4 -3.4 -8.7 -1 M178.3 294.3 q4.9 0.1 6.9 -4.4 M361.3 391 q-2 -4.5 -7 -4.3 M250.1 427.5 q-2.3 1.8 -1.5 4.6 M227.1 473.5 q2.8 2.5 6.2 0.7 M306 364.7 q-2 -3.7 -6.2 -3.2 M159.1 479.9 q2.1 -2.1 0.9 -4.8 M204.2 395.3 q-1.8 2.4 -0.1 5 M151.5 373.3 q-2.5 3.4 -0.3 7 M196.5 467.5 q-1.8 -4.5 -6.7 -4.6 M202.9 325.9 q-1.5 -2.9 -4.7 -2.5 M188.3 489.8 q-0.2 -4.2 -4.3 -5.6 M159.1 229.5 q3.6 2.6 7.4 0.2 M293.1 411.8 q2 -4.1 -1.1 -7.5 M187.1 419.6 q-4.8 1 -5.7 5.9 M181.2 381 q-2.5 -1.7 -5 0 M172.5 457.5 q-2 -3 -5.5 -2.3 M275 461.4 q-1.6 3.3 0.9 6.1 M153.7 365.7 q2.4 -0.7 2.6 -3.2 M185.6 261 q0.9 -3.4 -2 -5.6 M342.1 468 q3.8 1.6 6.7 -1.3 M219.8 548.5 q-3.1 -3.7 -7.7 -2.2 M188.6 373.7 q-1.5 -3.2 -5.1 -3 M252.3 569.8 q-3 1.5 -2.7 5 M388 379.5 q1.1 -4.5 -2.7 -7.3 M364.9 298.5 q-2.6 -4.5 -7.8 -3.8 M188.6 378.8 q-1.4 3 0.9 5.5 M203 404 q-2.6 0.5 -3.2 3.1 M352.7 432.2 q1.3 -3.7 -1.7 -6.4 M278.2 550.6 q-3.2 4.3 -0.3 8.9 M309.1 455.8 q-0.5 -3.1 -3.6 -3.8 M239.7 570.6 q-4.6 -2.2 -8.4 1.4 M289.3 503.7 q4.8 1.1 7.6 -3 M309.5 372.8 q2.4 -1.9 1.5 -4.9 M212 262.5 q2.6 3.9 7.2 2.9 M182.4 412.4 q2.9 1.6 5.5 -0.5 M355.6 368.8 q3.4 -0.8 3.9 -4.3 M203.6 476.3 q2.8 -0.3 3.7 -3.1 M202 399.1 q-0.4 -3.7 -3.9 -4.7" fill="none" stroke="#d690a6" stroke-width="1.100" opacity="0.27"/>
<g fill="#7f3550"><ellipse cx="161.7" cy="216.5" rx="2.5" ry="1.3" transform="rotate(109 161.7 216.5)"/><ellipse cx="167.2" cy="200.7" rx="2.4" ry="0.9" transform="rotate(289 167.2 200.7)"/><ellipse cx="169.9" cy="214.9" rx="1.6" ry="1" transform="rotate(409 169.9 214.9)"/><ellipse cx="229.7" cy="488.8" rx="2.6" ry="1" transform="rotate(287 229.7 488.8)"/><ellipse cx="225.1" cy="504.2" rx="1.8" ry="1.1" transform="rotate(467 225.1 504.2)"/><ellipse cx="359.7" cy="422.2" rx="2.2" ry="1.1" transform="rotate(374 359.7 422.2)"/><ellipse cx="224.8" cy="446.9" rx="2.2" ry="1.4" transform="rotate(147 224.8 446.9)"/><ellipse cx="239.6" cy="437.4" rx="2.6" ry="1.4" transform="rotate(327 239.6 437.4)"/><ellipse cx="165.4" cy="207" rx="1.7" ry="1.3" transform="rotate(45 165.4 207)"/><ellipse cx="160.5" cy="208.3" rx="1.9" ry="1" transform="rotate(105 160.5 208.3)"/><ellipse cx="156.9" cy="204.7" rx="2.2" ry="1" transform="rotate(165 156.9 204.7)"/><ellipse cx="295.8" cy="371.5" rx="2.8" ry="1.4" transform="rotate(179 295.8 371.5)"/><ellipse cx="299.3" cy="365.1" rx="1.7" ry="0.9" transform="rotate(239 299.3 365.1)"/><ellipse cx="306.6" cy="364.9" rx="2.5" ry="1.1" transform="rotate(299 306.6 364.9)"/><ellipse cx="248.1" cy="566" rx="1.8" ry="1.3" transform="rotate(164 248.1 566)"/><ellipse cx="262.5" cy="557.9" rx="2" ry="1.4" transform="rotate(318 262.5 557.9)"/><ellipse cx="264.6" cy="565" rx="1.6" ry="1" transform="rotate(369 264.6 565)"/><ellipse cx="223.4" cy="297.9" rx="2.2" ry="1.1" transform="rotate(468 223.4 297.9)"/><ellipse cx="226.2" cy="333.8" rx="2.7" ry="1.1" transform="rotate(449 226.2 333.8)"/><ellipse cx="275.7" cy="604.5" rx="1.9" ry="1.5" transform="rotate(199 275.7 604.5)"/><ellipse cx="341.6" cy="445.3" rx="2" ry="0.9" transform="rotate(97 341.6 445.3)"/><ellipse cx="335.6" cy="441.4" rx="2.5" ry="1.1" transform="rotate(148 335.6 441.4)"/><ellipse cx="334.8" cy="434.2" rx="2" ry="0.9" transform="rotate(200 334.8 434.2)"/><ellipse cx="350.9" cy="436.2" rx="2.6" ry="1.2" transform="rotate(354 350.9 436.2)"/><ellipse cx="208.4" cy="442.1" rx="2.6" ry="1" transform="rotate(65 208.4 442.1)"/><ellipse cx="201.2" cy="440.7" rx="1.7" ry="1.2" transform="rotate(137 201.2 440.7)"/><ellipse cx="200.3" cy="433.5" rx="2.7" ry="1.1" transform="rotate(209 200.3 433.5)"/><ellipse cx="212" cy="435.7" rx="2.7" ry="1.1" transform="rotate(353 212 435.7)"/><ellipse cx="158.1" cy="466.3" rx="1.7" ry="1.3" transform="rotate(188 158.1 466.3)"/><ellipse cx="164.8" cy="459.3" rx="2.5" ry="1.1" transform="rotate(260 164.8 459.3)"/><ellipse cx="341.5" cy="345.3" rx="2.5" ry="1.5" transform="rotate(31 341.5 345.3)"/><ellipse cx="328.4" cy="341" rx="2.3" ry="1.3" transform="rotate(185 328.4 341)"/><ellipse cx="342" cy="339.2" rx="2.8" ry="1" transform="rotate(340 342 339.2)"/><ellipse cx="316.5" cy="497.5" rx="2.1" ry="1.2" transform="rotate(123 316.5 497.5)"/><ellipse cx="313.9" cy="491" rx="2.2" ry="1.4" transform="rotate(195 313.9 491)"/><ellipse cx="151.1" cy="354.7" rx="2.2" ry="1" transform="rotate(169 151.1 354.7)"/><ellipse cx="153.9" cy="348.7" rx="2.2" ry="1.3" transform="rotate(241 153.9 348.7)"/><ellipse cx="204.4" cy="421.6" rx="2.5" ry="1.4" transform="rotate(416 204.4 421.6)"/><ellipse cx="215.7" cy="321.8" rx="2.1" ry="1" transform="rotate(270 215.7 321.8)"/><ellipse cx="222.3" cy="424.8" rx="2.2" ry="1" transform="rotate(179 222.3 424.8)"/><ellipse cx="229.4" cy="430.2" rx="2.8" ry="1.1" transform="rotate(436 229.4 430.2)"/><ellipse cx="224.5" cy="429.2" rx="2.1" ry="1.4" transform="rotate(488 224.5 429.2)"/><ellipse cx="169" cy="321.4" rx="1.9" ry="1.2" transform="rotate(255 169 321.4)"/><ellipse cx="338.7" cy="445.7" rx="1.7" ry="1.1" transform="rotate(326 338.7 445.7)"/><ellipse cx="233.6" cy="541" rx="2.2" ry="1.5" transform="rotate(200 233.6 541)"/><ellipse cx="183" cy="478.4" rx="2.4" ry="1.2" transform="rotate(95 183 478.4)"/><ellipse cx="331.2" cy="376.5" rx="2.6" ry="1.3" transform="rotate(138 331.2 376.5)"/><ellipse cx="330.5" cy="369.4" rx="2.7" ry="1.4" transform="rotate(210 330.5 369.4)"/><ellipse cx="170.4" cy="455.9" rx="1.8" ry="1.4" transform="rotate(334 170.4 455.9)"/><ellipse cx="298.5" cy="404.5" rx="2.1" ry="1.1" transform="rotate(174 298.5 404.5)"/><ellipse cx="302.8" cy="397.1" rx="2.5" ry="1.4" transform="rotate(246 302.8 397.1)"/><ellipse cx="241.4" cy="537.3" rx="1.8" ry="1.5" transform="rotate(157 241.4 537.3)"/><ellipse cx="253.1" cy="527.2" rx="2.7" ry="1.2" transform="rotate(301 253.1 527.2)"/><ellipse cx="223.8" cy="241.8" rx="2.8" ry="1.3" transform="rotate(347 223.8 241.8)"/><ellipse cx="215.4" cy="249.5" rx="2.4" ry="1" transform="rotate(467 215.4 249.5)"/><ellipse cx="205.2" cy="401.1" rx="1.9" ry="1.2" transform="rotate(42 205.2 401.1)"/><ellipse cx="196" cy="403" rx="1.9" ry="1.3" transform="rotate(114 196 403)"/><ellipse cx="206.3" cy="391.8" rx="2.6" ry="1.1" transform="rotate(330 206.3 391.8)"/><ellipse cx="356.1" cy="318.6" rx="2.3" ry="1.2" transform="rotate(302 356.1 318.6)"/><ellipse cx="358.6" cy="325" rx="1.8" ry="1.2" transform="rotate(374 358.6 325)"/><ellipse cx="205.1" cy="557.8" rx="2.7" ry="1.3" transform="rotate(190 205.1 557.8)"/><ellipse cx="214.5" cy="554.4" rx="2.2" ry="0.9" transform="rotate(310 214.5 554.4)"/><ellipse cx="354.3" cy="388" rx="1.7" ry="1" transform="rotate(151 354.3 388)"/><ellipse cx="180.9" cy="372.1" rx="2.2" ry="1" transform="rotate(4 180.9 372.1)"/><ellipse cx="176.4" cy="378.5" rx="1.7" ry="0.9" transform="rotate(64 176.4 378.5)"/><ellipse cx="169.7" cy="364.4" rx="2.6" ry="1.1" transform="rotate(244 169.7 364.4)"/><ellipse cx="215.5" cy="345" rx="2.4" ry="1.2" transform="rotate(189 215.5 345)"/><ellipse cx="219.6" cy="339.3" rx="2.5" ry="1" transform="rotate(241 219.6 339.3)"/><ellipse cx="226.6" cy="338.8" rx="2.2" ry="1" transform="rotate(292 226.6 338.8)"/><ellipse cx="231.3" cy="344.1" rx="1.8" ry="0.9" transform="rotate(344 231.3 344.1)"/><ellipse cx="230.2" cy="351.1" rx="2.6" ry="1.3" transform="rotate(395 230.2 351.1)"/><ellipse cx="208.6" cy="535.5" rx="1.8" ry="1.4" transform="rotate(95 208.6 535.5)"/><ellipse cx="202.3" cy="530.1" rx="2.5" ry="1.2" transform="rotate(167 202.3 530.1)"/><ellipse cx="205.5" cy="522.4" rx="2.8" ry="1.2" transform="rotate(239 205.5 522.4)"/><ellipse cx="146.6" cy="419.8" rx="2.4" ry="1.3" transform="rotate(141 146.6 419.8)"/><ellipse cx="145.3" cy="411.5" rx="2.8" ry="1.4" transform="rotate(201 145.3 411.5)"/><ellipse cx="151.9" cy="406.2" rx="2.1" ry="1.2" transform="rotate(261 151.9 406.2)"/><ellipse cx="154.5" cy="422.8" rx="2.7" ry="1" transform="rotate(441 154.5 422.8)"/><ellipse cx="195.1" cy="232.3" rx="2.6" ry="1.2" transform="rotate(66 195.1 232.3)"/><ellipse cx="188.8" cy="232.1" rx="1.6" ry="1.1" transform="rotate(117 188.8 232.1)"/><ellipse cx="197.9" cy="221.2" rx="2.7" ry="1" transform="rotate(323 197.9 221.2)"/><ellipse cx="199.4" cy="528.1" rx="2.4" ry="1.2" transform="rotate(363 199.4 528.1)"/><ellipse cx="196" cy="534.2" rx="2.2" ry="1.5" transform="rotate(415 196 534.2)"/><ellipse cx="285.2" cy="456" rx="1.9" ry="0.9" transform="rotate(163 285.2 456)"/><ellipse cx="287.8" cy="448.4" rx="2.5" ry="1.2" transform="rotate(235 287.8 448.4)"/><ellipse cx="334" cy="366.8" rx="2.1" ry="1.4" transform="rotate(138 334 366.8)"/><ellipse cx="338.4" cy="353.6" rx="2.8" ry="1.4" transform="rotate(258 338.4 353.6)"/><ellipse cx="346" cy="356.1" rx="2.6" ry="1.3" transform="rotate(318 346 356.1)"/><ellipse cx="341.6" cy="369.3" rx="1.9" ry="1.2" transform="rotate(438 341.6 369.3)"/><ellipse cx="243.4" cy="544.5" rx="2.7" ry="1.1" transform="rotate(149 243.4 544.5)"/><ellipse cx="247.3" cy="534.4" rx="1.9" ry="0.9" transform="rotate(252 247.3 534.4)"/><ellipse cx="248.4" cy="547.9" rx="2.3" ry="1.2" transform="rotate(458 248.4 547.9)"/><ellipse cx="173.7" cy="387.1" rx="1.8" ry="1.2" transform="rotate(283 173.7 387.1)"/><ellipse cx="380.3" cy="321.3" rx="1.9" ry="1.3" transform="rotate(114 380.3 321.3)"/><ellipse cx="376" cy="315.5" rx="1.8" ry="1.1" transform="rotate(174 376 315.5)"/><ellipse cx="390.3" cy="314" rx="2.7" ry="1.1" transform="rotate(354 390.3 314)"/><ellipse cx="194.8" cy="352.4" rx="2" ry="1.2" transform="rotate(272 194.8 352.4)"/><ellipse cx="216" cy="306.5" rx="1.7" ry="0.9" transform="rotate(14 216 306.5)"/><ellipse cx="360.8" cy="292" rx="2.2" ry="1.2" transform="rotate(60 360.8 292)"/><ellipse cx="255.9" cy="542" rx="1.8" ry="1" transform="rotate(168 255.9 542)"/><ellipse cx="279.5" cy="506.3" rx="2" ry="1.2" transform="rotate(89 279.5 506.3)"/><ellipse cx="296.5" cy="520.6" rx="1.5" ry="0.8" transform="rotate(46 296.5 520.6)"/><ellipse cx="175.4" cy="461" rx="1.9" ry="1" transform="rotate(167 175.4 461)"/><ellipse cx="240.3" cy="528.6" rx="1.2" ry="0.9" transform="rotate(26 240.3 528.6)"/><ellipse cx="181" cy="254.8" rx="2.3" ry="1.2" transform="rotate(20 181 254.8)"/><ellipse cx="371.3" cy="419.3" rx="2.2" ry="1.3" transform="rotate(138 371.3 419.3)"/><ellipse cx="225.1" cy="304.1" rx="1.1" ry="1.1" transform="rotate(152 225.1 304.1)"/><ellipse cx="367.5" cy="399.6" rx="2.2" ry="0.8" transform="rotate(27 367.5 399.6)"/><ellipse cx="164" cy="373.6" rx="1.7" ry="1" transform="rotate(54 164 373.6)"/><ellipse cx="258.7" cy="611" rx="1.8" ry="1.2" transform="rotate(86 258.7 611)"/><ellipse cx="290" cy="442.8" rx="2.4" ry="0.7" transform="rotate(109 290 442.8)"/><ellipse cx="205.9" cy="359.6" rx="2" ry="1.2" transform="rotate(44 205.9 359.6)"/><ellipse cx="187.9" cy="472.6" rx="2.3" ry="1" transform="rotate(110 187.9 472.6)"/><ellipse cx="297.4" cy="491.1" rx="2.3" ry="1" transform="rotate(127 297.4 491.1)"/><ellipse cx="309.9" cy="428.9" rx="1.8" ry="1.2" transform="rotate(109 309.9 428.9)"/><ellipse cx="336.5" cy="399.1" rx="1.5" ry="1" transform="rotate(38 336.5 399.1)"/><ellipse cx="315.1" cy="473.9" rx="1.5" ry="1" transform="rotate(116 315.1 473.9)"/><ellipse cx="369.9" cy="309.6" rx="1.8" ry="0.7" transform="rotate(68 369.9 309.6)"/><ellipse cx="197.1" cy="512.6" rx="1.5" ry="1.1" transform="rotate(130 197.1 512.6)"/><ellipse cx="224.2" cy="204.3" rx="1" ry="0.8" transform="rotate(36 224.2 204.3)"/><ellipse cx="185.7" cy="484.2" rx="1.3" ry="1.2" transform="rotate(79 185.7 484.2)"/><ellipse cx="329.7" cy="360.5" rx="1.6" ry="0.9" transform="rotate(71 329.7 360.5)"/><ellipse cx="179.5" cy="352.8" rx="1.6" ry="0.8" transform="rotate(28 179.5 352.8)"/><ellipse cx="193.5" cy="305.7" rx="2.2" ry="0.9" transform="rotate(73 193.5 305.7)"/><ellipse cx="373.4" cy="292.6" rx="2.2" ry="1" transform="rotate(162 373.4 292.6)"/><ellipse cx="268.8" cy="490.9" rx="2.3" ry="1.1" transform="rotate(56 268.8 490.9)"/><ellipse cx="368.1" cy="296.3" rx="1.4" ry="1.2" transform="rotate(156 368.1 296.3)"/><ellipse cx="327.5" cy="368.4" rx="2" ry="0.9" transform="rotate(74 327.5 368.4)"/><ellipse cx="182" cy="436.2" rx="1.6" ry="1.2" transform="rotate(133 182 436.2)"/><ellipse cx="315.8" cy="384.8" rx="1.6" ry="1.3" transform="rotate(101 315.8 384.8)"/><ellipse cx="216.4" cy="512.3" rx="1.9" ry="0.9" transform="rotate(153 216.4 512.3)"/><ellipse cx="299.9" cy="517.3" rx="1.4" ry="1.1" transform="rotate(83 299.9 517.3)"/><ellipse cx="182.5" cy="434.2" rx="2.2" ry="1.3" transform="rotate(9 182.5 434.2)"/><ellipse cx="157.5" cy="467.4" rx="1.5" ry="1.1" transform="rotate(53 157.5 467.4)"/><ellipse cx="189.5" cy="269.1" rx="1.8" ry="1.3" transform="rotate(26 189.5 269.1)"/><ellipse cx="173.5" cy="255.4" rx="1.5" ry="1.2" transform="rotate(126 173.5 255.4)"/><ellipse cx="231.1" cy="257.2" rx="2.3" ry="0.9" transform="rotate(12 231.1 257.2)"/><ellipse cx="201.2" cy="502" rx="2.1" ry="1.1" transform="rotate(55 201.2 502)"/><ellipse cx="264.4" cy="560.7" rx="1.2" ry="0.9" transform="rotate(152 264.4 560.7)"/><ellipse cx="333.4" cy="472.4" rx="1.1" ry="1" transform="rotate(2 333.4 472.4)"/><ellipse cx="185.7" cy="296.3" rx="2.1" ry="0.7" transform="rotate(12 185.7 296.3)"/><ellipse cx="191.2" cy="344.3" rx="1.3" ry="1" transform="rotate(21 191.2 344.3)"/><ellipse cx="156.2" cy="368.6" rx="1.6" ry="0.8" transform="rotate(108 156.2 368.6)"/><ellipse cx="254.5" cy="529.1" rx="1.4" ry="1.2" transform="rotate(73 254.5 529.1)"/><ellipse cx="264" cy="569.5" rx="1.3" ry="0.7" transform="rotate(145 264 569.5)"/><ellipse cx="218.7" cy="293.6" rx="1.9" ry="1" transform="rotate(143 218.7 293.6)"/><ellipse cx="201.8" cy="291.1" rx="1.8" ry="1.2" transform="rotate(48 201.8 291.1)"/><ellipse cx="206.2" cy="372.9" rx="1.8" ry="0.9" transform="rotate(178 206.2 372.9)"/><ellipse cx="273.5" cy="432.8" rx="1.4" ry="0.8" transform="rotate(86 273.5 432.8)"/><ellipse cx="270.3" cy="571.7" rx="1.2" ry="0.9" transform="rotate(7 270.3 571.7)"/><ellipse cx="195.5" cy="404.1" rx="1.9" ry="0.8" transform="rotate(156 195.5 404.1)"/><ellipse cx="173.4" cy="270.2" rx="2" ry="1.1" transform="rotate(131 173.4 270.2)"/><ellipse cx="147.9" cy="418.6" rx="1.2" ry="0.9" transform="rotate(102 147.9 418.6)"/><ellipse cx="234" cy="478.7" rx="2.1" ry="1" transform="rotate(146 234 478.7)"/><ellipse cx="210.7" cy="315.3" rx="1.2" ry="1" transform="rotate(129 210.7 315.3)"/><ellipse cx="383.8" cy="390.4" rx="2.2" ry="1.1" transform="rotate(129 383.8 390.4)"/><ellipse cx="268" cy="419.7" rx="1.2" ry="1.3" transform="rotate(135 268 419.7)"/><ellipse cx="169.2" cy="221.2" rx="1.1" ry="1" transform="rotate(131 169.2 221.2)"/><ellipse cx="259.1" cy="525.3" rx="1.3" ry="1.1" transform="rotate(20 259.1 525.3)"/><ellipse cx="375.1" cy="368.7" rx="1.1" ry="1.2" transform="rotate(79 375.1 368.7)"/><ellipse cx="185.3" cy="535.3" rx="2.3" ry="1.1" transform="rotate(96 185.3 535.3)"/><ellipse cx="199.3" cy="469.7" rx="2.3" ry="1.1" transform="rotate(139 199.3 469.7)"/><ellipse cx="336" cy="432.3" rx="1" ry="0.8" transform="rotate(38 336 432.3)"/><ellipse cx="250.8" cy="455.7" rx="2.1" ry="0.9" transform="rotate(159 250.8 455.7)"/><ellipse cx="214.4" cy="556.1" rx="1.8" ry="1.1" transform="rotate(6 214.4 556.1)"/><ellipse cx="152" cy="380.2" rx="2.1" ry="0.8" transform="rotate(152 152 380.2)"/><ellipse cx="165.9" cy="234.7" rx="2.2" ry="0.7" transform="rotate(51 165.9 234.7)"/><ellipse cx="195.1" cy="291.6" rx="1.5" ry="1.1" transform="rotate(63 195.1 291.6)"/><ellipse cx="184.6" cy="285.2" rx="1.9" ry="0.8" transform="rotate(77 184.6 285.2)"/><ellipse cx="233.6" cy="556.8" rx="1.3" ry="1.3" transform="rotate(168 233.6 556.8)"/><ellipse cx="312.1" cy="378.2" rx="2.4" ry="1.2" transform="rotate(46 312.1 378.2)"/><ellipse cx="361.3" cy="391" rx="1.4" ry="0.9" transform="rotate(1 361.3 391)"/><ellipse cx="218.2" cy="443.5" rx="1.1" ry="0.9" transform="rotate(142 218.2 443.5)"/><ellipse cx="384.5" cy="311" rx="2.2" ry="1" transform="rotate(118 384.5 311)"/><ellipse cx="306" cy="364.7" rx="1.6" ry="1.2" transform="rotate(180 306 364.7)"/><ellipse cx="159.1" cy="479.9" rx="1.9" ry="0.8" transform="rotate(140 159.1 479.9)"/><ellipse cx="204.2" cy="395.3" rx="1.6" ry="0.8" transform="rotate(142 204.2 395.3)"/><ellipse cx="151.5" cy="373.3" rx="1" ry="1" transform="rotate(0 151.5 373.3)"/><ellipse cx="196.5" cy="467.5" rx="1.8" ry="0.9" transform="rotate(120 196.5 467.5)"/><ellipse cx="216.3" cy="573.9" rx="1.6" ry="1.2" transform="rotate(111 216.3 573.9)"/><ellipse cx="159.1" cy="229.5" rx="1.7" ry="1" transform="rotate(55 159.1 229.5)"/><ellipse cx="221.8" cy="391.1" rx="2.1" ry="0.8" transform="rotate(114 221.8 391.1)"/><ellipse cx="153.7" cy="365.7" rx="1.2" ry="1.2" transform="rotate(93 153.7 365.7)"/><ellipse cx="200.2" cy="431.4" rx="1.9" ry="1.1" transform="rotate(54 200.2 431.4)"/><ellipse cx="256.6" cy="624.8" rx="1.1" ry="1.2" transform="rotate(95 256.6 624.8)"/><ellipse cx="388" cy="379.5" rx="1.4" ry="1.2" transform="rotate(90 388 379.5)"/><ellipse cx="198.4" cy="455.1" rx="1.8" ry="0.7" transform="rotate(145 198.4 455.1)"/><ellipse cx="376.5" cy="388.2" rx="1.6" ry="1.1" transform="rotate(71 376.5 388.2)"/><ellipse cx="352.1" cy="318.9" rx="2" ry="0.8" transform="rotate(159 352.1 318.9)"/><ellipse cx="182.3" cy="470.4" rx="1.5" ry="0.8" transform="rotate(157 182.3 470.4)"/><ellipse cx="188.6" cy="378.8" rx="1.7" ry="1" transform="rotate(125 188.6 378.8)"/><ellipse cx="168.8" cy="479.3" rx="1.2" ry="0.8" transform="rotate(115 168.8 479.3)"/><ellipse cx="352.7" cy="432.2" rx="1.3" ry="1.1" transform="rotate(34 352.7 432.2)"/><ellipse cx="218.8" cy="329.3" rx="2.3" ry="1.2" transform="rotate(55 218.8 329.3)"/><ellipse cx="159.4" cy="329.6" rx="2.4" ry="1" transform="rotate(130 159.4 329.6)"/><ellipse cx="368.8" cy="306.2" rx="1.2" ry="1.1" transform="rotate(148 368.8 306.2)"/><ellipse cx="182.4" cy="412.4" rx="1.6" ry="1.3" transform="rotate(65 182.4 412.4)"/><ellipse cx="355.6" cy="368.8" rx="1.2" ry="1" transform="rotate(3 355.6 368.8)"/><ellipse cx="202" cy="399.1" rx="1.2" ry="1.2" transform="rotate(91 202 399.1)"/></g>
<g fill="#8e3f59"><ellipse cx="156.3" cy="210.1" rx="2.5" ry="1" transform="rotate(169 156.3 210.1)"/><ellipse cx="159" cy="202.3" rx="2.7" ry="0.9" transform="rotate(229 159 202.3)"/><ellipse cx="347.9" cy="414.7" rx="2.5" ry="1.3" transform="rotate(230 347.9 414.7)"/><ellipse cx="356.5" cy="414.1" rx="2.1" ry="1.2" transform="rotate(302 356.5 414.1)"/><ellipse cx="318.4" cy="406.7" rx="1.9" ry="0.9" transform="rotate(158 318.4 406.7)"/><ellipse cx="318.8" cy="401.3" rx="2.2" ry="1.4" transform="rotate(210 318.8 401.3)"/><ellipse cx="330.4" cy="404.8" rx="2.3" ry="1.5" transform="rotate(364 330.4 404.8)"/><ellipse cx="224.4" cy="438.1" rx="2.1" ry="0.9" transform="rotate(207 224.4 438.1)"/><ellipse cx="231.8" cy="433.4" rx="2.4" ry="1.2" transform="rotate(267 231.8 433.4)"/><ellipse cx="240" cy="446.2" rx="1.6" ry="1.5" transform="rotate(387 240 446.2)"/><ellipse cx="163.1" cy="198.5" rx="2" ry="1.2" transform="rotate(285 163.1 198.5)"/><ellipse cx="166.7" cy="202.1" rx="2" ry="1.1" transform="rotate(345 166.7 202.1)"/><ellipse cx="197.7" cy="309.4" rx="2.1" ry="1.5" transform="rotate(174 197.7 309.4)"/><ellipse cx="212.5" cy="312.5" rx="2.4" ry="1.2" transform="rotate(390 212.5 312.5)"/><ellipse cx="299.6" cy="377.7" rx="2.1" ry="1.3" transform="rotate(119 299.6 377.7)"/><ellipse cx="310.4" cy="371.2" rx="1.8" ry="1.2" transform="rotate(359 310.4 371.2)"/><ellipse cx="253" cy="571.4" rx="1.6" ry="1" transform="rotate(112 253 571.4)"/><ellipse cx="255.7" cy="555.1" rx="2.1" ry="1.2" transform="rotate(266 255.7 555.1)"/><ellipse cx="260.4" cy="571" rx="2.6" ry="1.2" transform="rotate(421 260.4 571)"/><ellipse cx="228.1" cy="283.3" rx="1.9" ry="1.3" transform="rotate(288 228.1 283.3)"/><ellipse cx="217.8" cy="323.6" rx="2.3" ry="1" transform="rotate(192 217.8 323.6)"/><ellipse cx="222.2" cy="317.7" rx="2.1" ry="1.1" transform="rotate(243 222.2 317.7)"/><ellipse cx="234.3" cy="323.3" rx="2.3" ry="1.5" transform="rotate(346 234.3 323.3)"/><ellipse cx="232.8" cy="330.5" rx="2.3" ry="1" transform="rotate(397 232.8 330.5)"/><ellipse cx="283.4" cy="613.4" rx="2.4" ry="1" transform="rotate(79 283.4 613.4)"/><ellipse cx="276.9" cy="611.2" rx="2.6" ry="1.4" transform="rotate(139 276.9 611.2)"/><ellipse cx="287.3" cy="602.3" rx="1.9" ry="1.3" transform="rotate(319 287.3 602.3)"/><ellipse cx="340" cy="429.2" rx="2.8" ry="1.5" transform="rotate(251 340 429.2)"/><ellipse cx="172.1" cy="473.2" rx="1.6" ry="1" transform="rotate(44 172.1 473.2)"/><ellipse cx="330.5" cy="346.7" rx="2" ry="1.4" transform="rotate(134 330.5 346.7)"/><ellipse cx="319.4" cy="486.5" rx="1.6" ry="1.4" transform="rotate(267 319.4 486.5)"/><ellipse cx="323.5" cy="497.1" rx="2.7" ry="1.5" transform="rotate(411 323.5 497.1)"/><ellipse cx="155.9" cy="359.1" rx="2.1" ry="1.3" transform="rotate(97 155.9 359.1)"/><ellipse cx="160.4" cy="349.5" rx="2.7" ry="1.3" transform="rotate(313 160.4 349.5)"/><ellipse cx="211.4" cy="334.8" rx="2.5" ry="1.3" transform="rotate(126 211.4 334.8)"/><ellipse cx="222.5" cy="326.8" rx="1.9" ry="1.2" transform="rotate(342 222.5 326.8)"/><ellipse cx="224.4" cy="420.3" rx="2.4" ry="1.1" transform="rotate(230 224.4 420.3)"/><ellipse cx="233.1" cy="427" rx="1.7" ry="1.4" transform="rotate(385 233.1 427)"/><ellipse cx="165" cy="324.8" rx="1.9" ry="1.1" transform="rotate(204 165 324.8)"/><ellipse cx="176.5" cy="327" rx="2.1" ry="1.4" transform="rotate(358 176.5 327)"/><ellipse cx="174.4" cy="331.7" rx="2.3" ry="1.2" transform="rotate(409 174.4 331.7)"/><ellipse cx="332.8" cy="442.8" rx="2.5" ry="1.5" transform="rotate(266 332.8 442.8)"/><ellipse cx="177.7" cy="467.2" rx="2.4" ry="1.5" transform="rotate(215 177.7 467.2)"/><ellipse cx="190" cy="468.3" rx="2.8" ry="1.1" transform="rotate(335 190 468.3)"/><ellipse cx="337" cy="366.5" rx="2.6" ry="1.2" transform="rotate(282 337 366.5)"/><ellipse cx="341.8" cy="371.8" rx="2.2" ry="1.1" transform="rotate(354 341.8 371.8)"/><ellipse cx="163.2" cy="462.9" rx="1.6" ry="1.2" transform="rotate(118 163.2 462.9)"/><ellipse cx="304.2" cy="410.8" rx="1.9" ry="1.3" transform="rotate(102 304.2 410.8)"/><ellipse cx="243.6" cy="528" rx="2.2" ry="1" transform="rotate(229 243.6 528)"/><ellipse cx="191.4" cy="394.8" rx="2.2" ry="1" transform="rotate(186 191.4 394.8)"/><ellipse cx="197.7" cy="387.9" rx="2.8" ry="0.9" transform="rotate(258 197.7 387.9)"/><ellipse cx="347.6" cy="325.7" rx="2.5" ry="1" transform="rotate(158 347.6 325.7)"/><ellipse cx="353.3" cy="329.3" rx="2.7" ry="0.9" transform="rotate(446 353.3 329.3)"/><ellipse cx="366.1" cy="390" rx="2.3" ry="1.5" transform="rotate(48 366.1 390)"/><ellipse cx="359.8" cy="391.9" rx="1.9" ry="1.5" transform="rotate(100 359.8 391.9)"/><ellipse cx="354" cy="381.4" rx="2.6" ry="0.9" transform="rotate(202 354 381.4)"/><ellipse cx="365.4" cy="378.1" rx="2" ry="1.5" transform="rotate(305 365.4 378.1)"/><ellipse cx="165.2" cy="370.9" rx="1.8" ry="1.4" transform="rotate(184 165.2 370.9)"/><ellipse cx="177.5" cy="365" rx="2.6" ry="1.2" transform="rotate(304 177.5 365)"/><ellipse cx="213.8" cy="523.1" rx="2.7" ry="1.5" transform="rotate(311 213.8 523.1)"/><ellipse cx="215.7" cy="531.2" rx="2.7" ry="1.4" transform="rotate(383 215.7 531.2)"/><ellipse cx="159.7" cy="409.2" rx="2.2" ry="1" transform="rotate(321 159.7 409.2)"/><ellipse cx="161" cy="417.6" rx="1.9" ry="1" transform="rotate(381 161 417.6)"/><ellipse cx="184.9" cy="227.1" rx="2.5" ry="1.1" transform="rotate(168 184.9 227.1)"/><ellipse cx="186.5" cy="221" rx="2.3" ry="1.4" transform="rotate(220 186.5 221)"/><ellipse cx="184.3" cy="523.6" rx="2.6" ry="1.3" transform="rotate(209 184.3 523.6)"/><ellipse cx="190" cy="519.6" rx="2" ry="1.5" transform="rotate(261 190 519.6)"/><ellipse cx="291.6" cy="460.8" rx="2.3" ry="1.2" transform="rotate(91 291.6 460.8)"/><ellipse cx="298.1" cy="456.2" rx="2.7" ry="1.3" transform="rotate(379 298.1 456.2)"/><ellipse cx="332.4" cy="358.9" rx="2" ry="1.1" transform="rotate(198 332.4 358.9)"/><ellipse cx="242.9" cy="538.5" rx="1.7" ry="1" transform="rotate(201 242.9 538.5)"/><ellipse cx="253.2" cy="535.2" rx="1.8" ry="1.4" transform="rotate(304 253.2 535.2)"/><ellipse cx="256.3" cy="540.4" rx="2.1" ry="1.3" transform="rotate(355 256.3 540.4)"/><ellipse cx="254.2" cy="546" rx="1.7" ry="1.3" transform="rotate(406 254.2 546)"/><ellipse cx="164.6" cy="396.9" rx="1.7" ry="1.4" transform="rotate(163 164.6 396.9)"/><ellipse cx="379" cy="309" rx="2.3" ry="1.3" transform="rotate(234 379 309)"/><ellipse cx="386.1" cy="308.2" rx="2.2" ry="1.3" transform="rotate(294 386.1 308.2)"/><ellipse cx="194.4" cy="366.1" rx="2.4" ry="1.2" transform="rotate(92 194.4 366.1)"/><ellipse cx="188.5" cy="362.5" rx="2.2" ry="1.2" transform="rotate(152 188.5 362.5)"/><ellipse cx="188.7" cy="355.6" rx="2.4" ry="1.4" transform="rotate(212 188.7 355.6)"/><ellipse cx="226.3" cy="462.9" rx="1.7" ry="0.7" transform="rotate(59 226.3 462.9)"/><ellipse cx="164.5" cy="342" rx="1" ry="1.2" transform="rotate(173 164.5 342)"/><ellipse cx="195.8" cy="330.4" rx="1.2" ry="1.1" transform="rotate(20 195.8 330.4)"/><ellipse cx="203.6" cy="316.3" rx="1.7" ry="1" transform="rotate(73 203.6 316.3)"/><ellipse cx="370.1" cy="335.3" rx="2.2" ry="0.9" transform="rotate(118 370.1 335.3)"/><ellipse cx="329.5" cy="347.5" rx="2.1" ry="0.8" transform="rotate(110 329.5 347.5)"/><ellipse cx="172.3" cy="201.3" rx="1.6" ry="1.2" transform="rotate(117 172.3 201.3)"/><ellipse cx="185.8" cy="490.1" rx="1.1" ry="1" transform="rotate(100 185.8 490.1)"/><ellipse cx="163.4" cy="238" rx="2.1" ry="0.7" transform="rotate(93 163.4 238)"/><ellipse cx="285.4" cy="441.9" rx="1.5" ry="0.8" transform="rotate(113 285.4 441.9)"/><ellipse cx="270.4" cy="557.4" rx="1.8" ry="1.1" transform="rotate(129 270.4 557.4)"/><ellipse cx="281.7" cy="490.4" rx="1.8" ry="0.8" transform="rotate(7 281.7 490.4)"/><ellipse cx="379.1" cy="379.7" rx="1.2" ry="1" transform="rotate(115 379.1 379.7)"/><ellipse cx="204.3" cy="441.1" rx="1" ry="1.2" transform="rotate(15 204.3 441.1)"/><ellipse cx="213.2" cy="413.8" rx="1.5" ry="0.9" transform="rotate(118 213.2 413.8)"/><ellipse cx="291" cy="523.8" rx="2.3" ry="1.2" transform="rotate(109 291 523.8)"/><ellipse cx="306.7" cy="386.7" rx="2.2" ry="1.2" transform="rotate(115 306.7 386.7)"/><ellipse cx="362.1" cy="292.9" rx="1.9" ry="1" transform="rotate(129 362.1 292.9)"/><ellipse cx="149.8" cy="341" rx="1.2" ry="1" transform="rotate(91 149.8 341)"/><ellipse cx="151.8" cy="323.1" rx="1.5" ry="1.1" transform="rotate(80 151.8 323.1)"/><ellipse cx="174.8" cy="231.4" rx="1.9" ry="0.8" transform="rotate(116 174.8 231.4)"/><ellipse cx="198.9" cy="325" rx="1.8" ry="0.8" transform="rotate(176 198.9 325)"/><ellipse cx="356.7" cy="391.1" rx="1.7" ry="0.8" transform="rotate(156 356.7 391.1)"/><ellipse cx="359.5" cy="371.8" rx="1.6" ry="1.2" transform="rotate(175 359.5 371.8)"/><ellipse cx="260.6" cy="451.7" rx="2.2" ry="1.1" transform="rotate(80 260.6 451.7)"/><ellipse cx="218" cy="442.1" rx="1.6" ry="1" transform="rotate(99 218 442.1)"/><ellipse cx="324.6" cy="470.5" rx="1.6" ry="1.2" transform="rotate(80 324.6 470.5)"/><ellipse cx="334.9" cy="443.1" rx="2.1" ry="0.7" transform="rotate(167 334.9 443.1)"/><ellipse cx="220.9" cy="351.4" rx="1.2" ry="0.8" transform="rotate(142 220.9 351.4)"/><ellipse cx="367.8" cy="335.2" rx="2.4" ry="0.9" transform="rotate(139 367.8 335.2)"/><ellipse cx="197.6" cy="503.7" rx="1.8" ry="0.7" transform="rotate(117 197.6 503.7)"/><ellipse cx="346.1" cy="430.1" rx="1.1" ry="1.2" transform="rotate(50 346.1 430.1)"/><ellipse cx="314.8" cy="489.3" rx="2.3" ry="1.2" transform="rotate(105 314.8 489.3)"/><ellipse cx="232" cy="222.7" rx="1.2" ry="1.2" transform="rotate(114 232 222.7)"/><ellipse cx="298" cy="493.6" rx="1" ry="1.2" transform="rotate(86 298 493.6)"/><ellipse cx="252.4" cy="520" rx="2.3" ry="1" transform="rotate(23 252.4 520)"/><ellipse cx="221.6" cy="471.2" rx="2" ry="1" transform="rotate(160 221.6 471.2)"/><ellipse cx="273.4" cy="457.5" rx="2" ry="0.8" transform="rotate(10 273.4 457.5)"/><ellipse cx="170.3" cy="431.2" rx="2.1" ry="0.8" transform="rotate(96 170.3 431.2)"/><ellipse cx="163.4" cy="352.7" rx="2" ry="1" transform="rotate(48 163.4 352.7)"/><ellipse cx="219" cy="540.8" rx="2" ry="1.3" transform="rotate(162 219 540.8)"/><ellipse cx="205.9" cy="494.5" rx="1.9" ry="1" transform="rotate(132 205.9 494.5)"/><ellipse cx="203.5" cy="213.6" rx="1.6" ry="0.9" transform="rotate(7 203.5 213.6)"/><ellipse cx="229.6" cy="236.3" rx="1.7" ry="0.9" transform="rotate(59 229.6 236.3)"/><ellipse cx="177.9" cy="303.3" rx="1.2" ry="0.9" transform="rotate(36 177.9 303.3)"/><ellipse cx="237.5" cy="509.2" rx="1.2" ry="1" transform="rotate(72 237.5 509.2)"/><ellipse cx="171" cy="401.8" rx="2.2" ry="1" transform="rotate(108 171 401.8)"/><ellipse cx="219.9" cy="489.8" rx="1.2" ry="1.1" transform="rotate(20 219.9 489.8)"/><ellipse cx="312.5" cy="492.8" rx="1" ry="1.3" transform="rotate(5 312.5 492.8)"/><ellipse cx="184.2" cy="432.3" rx="2.3" ry="0.8" transform="rotate(11 184.2 432.3)"/><ellipse cx="271.2" cy="432.9" rx="1.2" ry="0.8" transform="rotate(86 271.2 432.9)"/><ellipse cx="178.7" cy="239.9" rx="2.3" ry="1.1" transform="rotate(77 178.7 239.9)"/><ellipse cx="264.5" cy="630.3" rx="1.6" ry="0.8" transform="rotate(117 264.5 630.3)"/><ellipse cx="197.4" cy="204.9" rx="1.9" ry="0.9" transform="rotate(158 197.4 204.9)"/><ellipse cx="248.8" cy="597.8" rx="2" ry="1.1" transform="rotate(34 248.8 597.8)"/><ellipse cx="317.7" cy="479" rx="1.4" ry="1.2" transform="rotate(156 317.7 479)"/><ellipse cx="180.9" cy="477.3" rx="1.4" ry="0.9" transform="rotate(46 180.9 477.3)"/><ellipse cx="351.5" cy="403.8" rx="1.2" ry="0.8" transform="rotate(43 351.5 403.8)"/><ellipse cx="268.4" cy="589.2" rx="2.3" ry="0.9" transform="rotate(128 268.4 589.2)"/><ellipse cx="178.3" cy="294.3" rx="2.3" ry="1.2" transform="rotate(107 178.3 294.3)"/><ellipse cx="210" cy="352.8" rx="1.1" ry="1.2" transform="rotate(152 210 352.8)"/><ellipse cx="259.5" cy="610.5" rx="1.7" ry="0.9" transform="rotate(141 259.5 610.5)"/><ellipse cx="364.7" cy="366.3" rx="1.1" ry="0.8" transform="rotate(168 364.7 366.3)"/><ellipse cx="217.4" cy="380.5" rx="1.2" ry="1.1" transform="rotate(126 217.4 380.5)"/><ellipse cx="227.1" cy="473.5" rx="1.7" ry="1.3" transform="rotate(43 227.1 473.5)"/><ellipse cx="285.9" cy="495.4" rx="1.5" ry="1.1" transform="rotate(156 285.9 495.4)"/><ellipse cx="188.3" cy="489.8" rx="1.1" ry="0.9" transform="rotate(133 188.3 489.8)"/><ellipse cx="293.1" cy="411.8" rx="1.3" ry="1" transform="rotate(70 293.1 411.8)"/><ellipse cx="198.3" cy="501.3" rx="1.5" ry="1.1" transform="rotate(40 198.3 501.3)"/><ellipse cx="157.8" cy="265.4" rx="1.6" ry="1.2" transform="rotate(24 157.8 265.4)"/><ellipse cx="172.5" cy="457.5" rx="2.1" ry="1" transform="rotate(77 172.5 457.5)"/><ellipse cx="256.8" cy="490.5" rx="1.7" ry="0.9" transform="rotate(28 256.8 490.5)"/><ellipse cx="192" cy="506.2" rx="1.4" ry="0.9" transform="rotate(38 192 506.2)"/><ellipse cx="342.1" cy="468" rx="2.1" ry="0.8" transform="rotate(163 342.1 468)"/><ellipse cx="188.6" cy="373.7" rx="2.2" ry="0.8" transform="rotate(71 188.6 373.7)"/><ellipse cx="223.5" cy="253.5" rx="1.9" ry="1.1" transform="rotate(21 223.5 253.5)"/><ellipse cx="187.4" cy="315.4" rx="1.4" ry="1.1" transform="rotate(10 187.4 315.4)"/><ellipse cx="202.4" cy="512" rx="2.1" ry="1.1" transform="rotate(172 202.4 512)"/><ellipse cx="308" cy="497.3" rx="1.3" ry="1.1" transform="rotate(111 308 497.3)"/><ellipse cx="309.1" cy="455.8" rx="2" ry="0.7" transform="rotate(19 309.1 455.8)"/><ellipse cx="257.3" cy="443.9" rx="2" ry="0.8" transform="rotate(83 257.3 443.9)"/><ellipse cx="239.7" cy="570.6" rx="2" ry="0.8" transform="rotate(166 239.7 570.6)"/><ellipse cx="289.3" cy="503.7" rx="2.1" ry="0.8" transform="rotate(80 289.3 503.7)"/><ellipse cx="176.4" cy="226.2" rx="1.7" ry="0.8" transform="rotate(105 176.4 226.2)"/><ellipse cx="276.9" cy="516.7" rx="1.9" ry="0.9" transform="rotate(86 276.9 516.7)"/><ellipse cx="249.4" cy="492.9" rx="1.8" ry="1" transform="rotate(65 249.4 492.9)"/><ellipse cx="252.9" cy="498.8" rx="2.3" ry="1" transform="rotate(148 252.9 498.8)"/><ellipse cx="381.1" cy="317.6" rx="2.3" ry="1.3" transform="rotate(61 381.1 317.6)"/><ellipse cx="149.1" cy="377.9" rx="2.2" ry="0.9" transform="rotate(176 149.1 377.9)"/><ellipse cx="203.6" cy="476.3" rx="1.1" ry="1" transform="rotate(93 203.6 476.3)"/><ellipse cx="161.7" cy="356.6" rx="1.8" ry="0.9" transform="rotate(119 161.7 356.6)"/><ellipse cx="312.8" cy="404.9" rx="1.7" ry="1.1" transform="rotate(36 312.8 404.9)"/><ellipse cx="346.8" cy="370.7" rx="1.9" ry="0.7" transform="rotate(0 346.8 370.7)"/></g>
<g fill="#9a4863"><ellipse cx="172.7" cy="207" rx="2.4" ry="1.5" transform="rotate(349 172.7 207)"/><ellipse cx="219.6" cy="498.4" rx="2.1" ry="1.4" transform="rotate(167 219.6 498.4)"/><ellipse cx="221.9" cy="490.7" rx="1.7" ry="1.3" transform="rotate(227 221.9 490.7)"/><ellipse cx="235.3" cy="494.7" rx="2.7" ry="1.5" transform="rotate(347 235.3 494.7)"/><ellipse cx="232.9" cy="502.4" rx="2.7" ry="1.2" transform="rotate(407 232.9 502.4)"/><ellipse cx="353" cy="427.7" rx="2.5" ry="1.1" transform="rotate(86 353 427.7)"/><ellipse cx="345.7" cy="423" rx="1.8" ry="1.2" transform="rotate(158 345.7 423)"/><ellipse cx="322.4" cy="410.3" rx="2.1" ry="1" transform="rotate(107 322.4 410.3)"/><ellipse cx="323.2" cy="398.2" rx="2.1" ry="1.1" transform="rotate(261 323.2 398.2)"/><ellipse cx="328.4" cy="399.8" rx="2" ry="1.4" transform="rotate(312 328.4 399.8)"/><ellipse cx="327.7" cy="409.5" rx="2.1" ry="1.4" transform="rotate(415 327.7 409.5)"/><ellipse cx="232.6" cy="450.9" rx="2" ry="1.1" transform="rotate(87 232.6 450.9)"/><ellipse cx="158.2" cy="199.8" rx="2.4" ry="1.1" transform="rotate(225 158.2 199.8)"/><ellipse cx="202.4" cy="301.3" rx="1.6" ry="1" transform="rotate(246 202.4 301.3)"/><ellipse cx="211.5" cy="303.2" rx="2.8" ry="1.2" transform="rotate(318 211.5 303.2)"/><ellipse cx="204" cy="316.3" rx="2.8" ry="1.3" transform="rotate(462 204 316.3)"/><ellipse cx="306.9" cy="377.6" rx="2.3" ry="1" transform="rotate(419 306.9 377.6)"/><ellipse cx="249.3" cy="558.7" rx="2.3" ry="1.2" transform="rotate(215 249.3 558.7)"/><ellipse cx="218.3" cy="292.2" rx="2" ry="1.4" transform="rotate(168 218.3 292.2)"/><ellipse cx="220.6" cy="284.9" rx="2.2" ry="1.4" transform="rotate(228 220.6 284.9)"/><ellipse cx="233.3" cy="289" rx="1.8" ry="1" transform="rotate(348 233.3 289)"/><ellipse cx="230.9" cy="296.3" rx="1.9" ry="1.4" transform="rotate(408 230.9 296.3)"/><ellipse cx="219.6" cy="330.7" rx="2.5" ry="1.2" transform="rotate(140 219.6 330.7)"/><ellipse cx="229.6" cy="317.6" rx="2.6" ry="1.1" transform="rotate(295 229.6 317.6)"/><ellipse cx="288.6" cy="609" rx="1.7" ry="1.1" transform="rotate(19 288.6 609)"/><ellipse cx="280.9" cy="600" rx="1.8" ry="1.2" transform="rotate(259 280.9 600)"/><ellipse cx="348.4" cy="443" rx="2.2" ry="1" transform="rotate(46 348.4 443)"/><ellipse cx="347.1" cy="430.1" rx="1.9" ry="1.4" transform="rotate(303 347.1 430.1)"/><ellipse cx="206.9" cy="430.4" rx="1.6" ry="1" transform="rotate(281 206.9 430.4)"/><ellipse cx="162.6" cy="474.8" rx="1.9" ry="1.4" transform="rotate(116 162.6 474.8)"/><ellipse cx="173.5" cy="463.6" rx="2.6" ry="1" transform="rotate(332 173.5 463.6)"/><ellipse cx="336.3" cy="348.7" rx="2" ry="1.3" transform="rotate(83 336.3 348.7)"/><ellipse cx="331.6" cy="335.8" rx="2.6" ry="1.3" transform="rotate(237 331.6 335.8)"/><ellipse cx="337.6" cy="335" rx="2.7" ry="1.4" transform="rotate(288 337.6 335)"/><ellipse cx="325.3" cy="490.3" rx="1.9" ry="0.9" transform="rotate(339 325.3 490.3)"/><ellipse cx="161.6" cy="355.9" rx="2.8" ry="1.1" transform="rotate(25 161.6 355.9)"/><ellipse cx="196.3" cy="421.2" rx="2" ry="1.3" transform="rotate(128 196.3 421.2)"/><ellipse cx="194.1" cy="413.4" rx="2.7" ry="1.1" transform="rotate(200 194.1 413.4)"/><ellipse cx="200.9" cy="408.9" rx="1.9" ry="1.5" transform="rotate(272 200.9 408.9)"/><ellipse cx="207.3" cy="413.9" rx="2.4" ry="1.1" transform="rotate(344 207.3 413.9)"/><ellipse cx="208.8" cy="326.8" rx="2.7" ry="1.5" transform="rotate(198 208.8 326.8)"/><ellipse cx="219.9" cy="334.9" rx="2.2" ry="1.1" transform="rotate(414 219.9 334.9)"/><ellipse cx="229.2" cy="419.1" rx="2.8" ry="1" transform="rotate(282 229.2 419.1)"/><ellipse cx="233" cy="422.1" rx="2.6" ry="1.3" transform="rotate(333 233 422.1)"/><ellipse cx="169.4" cy="333.1" rx="2.8" ry="1.2" transform="rotate(101 169.4 333.1)"/><ellipse cx="165.2" cy="330" rx="1.6" ry="1.3" transform="rotate(152 165.2 330)"/><ellipse cx="174.1" cy="322.4" rx="2" ry="1.4" transform="rotate(306 174.1 322.4)"/><ellipse cx="327.9" cy="453" rx="2.7" ry="0.9" transform="rotate(146 327.9 453)"/><ellipse cx="327.4" cy="446.5" rx="2.5" ry="1.2" transform="rotate(206 327.4 446.5)"/><ellipse cx="339.1" cy="452.2" rx="2.1" ry="1.3" transform="rotate(386 339.1 452.2)"/><ellipse cx="333.7" cy="455.8" rx="2" ry="1" transform="rotate(446 333.7 455.8)"/><ellipse cx="248.1" cy="546.4" rx="2.7" ry="1.1" transform="rotate(20 248.1 546.4)"/><ellipse cx="242.1" cy="551.3" rx="1.6" ry="1.1" transform="rotate(80 242.1 551.3)"/><ellipse cx="234.9" cy="548.6" rx="2.5" ry="1.3" transform="rotate(140 234.9 548.6)"/><ellipse cx="239.6" cy="536.1" rx="2.3" ry="1.2" transform="rotate(260 239.6 536.1)"/><ellipse cx="246.8" cy="538.8" rx="2.5" ry="1.5" transform="rotate(320 246.8 538.8)"/><ellipse cx="177.1" cy="474.3" rx="2" ry="1.3" transform="rotate(155 177.1 474.3)"/><ellipse cx="184.2" cy="464.2" rx="2.2" ry="1.3" transform="rotate(275 184.2 464.2)"/><ellipse cx="189.4" cy="475.4" rx="2.1" ry="1.3" transform="rotate(395 189.4 475.4)"/><ellipse cx="338.2" cy="378" rx="2.2" ry="0.9" transform="rotate(426 338.2 378)"/><ellipse cx="160.5" cy="457.3" rx="2.4" ry="1.1" transform="rotate(190 160.5 457.3)"/><ellipse cx="164.9" cy="453" rx="1.9" ry="1.1" transform="rotate(262 164.9 453)"/><ellipse cx="169.3" cy="462.1" rx="1.7" ry="1.3" transform="rotate(406 169.3 462.1)"/><ellipse cx="311.9" cy="407.4" rx="2.4" ry="1.3" transform="rotate(30 311.9 407.4)"/><ellipse cx="311.1" cy="399" rx="2.5" ry="1.1" transform="rotate(318 311.1 399)"/><ellipse cx="256.9" cy="536" rx="2.5" ry="1.4" transform="rotate(13 256.9 536)"/><ellipse cx="249.6" cy="542.3" rx="2.1" ry="1.4" transform="rotate(85 249.6 542.3)"/><ellipse cx="211" cy="244.7" rx="2.7" ry="0.9" transform="rotate(167 211 244.7)"/><ellipse cx="212.9" cy="238.4" rx="1.6" ry="1.4" transform="rotate(227 212.9 238.4)"/><ellipse cx="219.3" cy="236.9" rx="1.6" ry="1.3" transform="rotate(287 219.3 236.9)"/><ellipse cx="221.9" cy="248.1" rx="2.4" ry="1.1" transform="rotate(407 221.9 248.1)"/><ellipse cx="349.3" cy="319.1" rx="1.6" ry="1" transform="rotate(230 349.3 319.1)"/><ellipse cx="212.8" cy="564.2" rx="2.4" ry="1.5" transform="rotate(70 212.8 564.2)"/><ellipse cx="207.1" cy="563.2" rx="2.4" ry="1" transform="rotate(130 207.1 563.2)"/><ellipse cx="208.9" cy="553.4" rx="2.1" ry="1.3" transform="rotate(250 208.9 553.4)"/><ellipse cx="216.5" cy="559.8" rx="2.3" ry="1.2" transform="rotate(370 216.5 559.8)"/><ellipse cx="358.9" cy="377" rx="2.7" ry="1.2" transform="rotate(254 358.9 377)"/><ellipse cx="368.7" cy="383.9" rx="1.8" ry="0.9" transform="rotate(357 368.7 383.9)"/><ellipse cx="168.6" cy="377.9" rx="1.7" ry="1.1" transform="rotate(124 168.6 377.9)"/><ellipse cx="224" cy="354.5" rx="1.8" ry="1.4" transform="rotate(87 224 354.5)"/><ellipse cx="217.5" cy="351.8" rx="2.8" ry="1.3" transform="rotate(138 217.5 351.8)"/><ellipse cx="199.2" cy="227.4" rx="1.7" ry="1.4" transform="rotate(14 199.2 227.4)"/><ellipse cx="192.2" cy="218.4" rx="2.1" ry="1.3" transform="rotate(271 192.2 218.4)"/><ellipse cx="183.9" cy="530.6" rx="1.7" ry="1.3" transform="rotate(158 183.9 530.6)"/><ellipse cx="196.7" cy="521.6" rx="1.8" ry="1.1" transform="rotate(312 196.7 521.6)"/><ellipse cx="189.1" cy="535.3" rx="2.8" ry="1.2" transform="rotate(466 189.1 535.3)"/><ellipse cx="295.8" cy="448.6" rx="2.1" ry="1.1" transform="rotate(307 295.8 448.6)"/><ellipse cx="347.6" cy="364" rx="2.7" ry="1.1" transform="rotate(378 347.6 364)"/><ellipse cx="166.3" cy="389.3" rx="1.8" ry="1.3" transform="rotate(223 166.3 389.3)"/><ellipse cx="179.3" cy="392.3" rx="2.5" ry="1.5" transform="rotate(343 179.3 392.3)"/><ellipse cx="177.6" cy="399.9" rx="1.9" ry="1.2" transform="rotate(403 177.6 399.9)"/><ellipse cx="170.2" cy="402.1" rx="2.7" ry="1.4" transform="rotate(463 170.2 402.1)"/><ellipse cx="387.4" cy="320.6" rx="2.7" ry="1" transform="rotate(54 387.4 320.6)"/><ellipse cx="200.5" cy="362.9" rx="2.5" ry="1.3" transform="rotate(32 200.5 362.9)"/><ellipse cx="200.7" cy="356" rx="1.7" ry="1.4" transform="rotate(332 200.7 356)"/><ellipse cx="205.1" cy="235.1" rx="1.8" ry="1.1" transform="rotate(101 205.1 235.1)"/><ellipse cx="222.9" cy="539.6" rx="2.2" ry="1.2" transform="rotate(40 222.9 539.6)"/><ellipse cx="358.6" cy="375.9" rx="2" ry="1.1" transform="rotate(95 358.6 375.9)"/><ellipse cx="231.8" cy="442.6" rx="2.1" ry="1" transform="rotate(105 231.8 442.6)"/><ellipse cx="348.9" cy="456.8" rx="1.7" ry="1.2" transform="rotate(99 348.9 456.8)"/><ellipse cx="184" cy="481.4" rx="1.7" ry="0.9" transform="rotate(128 184 481.4)"/><ellipse cx="264.2" cy="539.3" rx="2" ry="0.8" transform="rotate(79 264.2 539.3)"/><ellipse cx="179.6" cy="428.9" rx="1.1" ry="0.9" transform="rotate(84 179.6 428.9)"/><ellipse cx="247.9" cy="548.7" rx="2.3" ry="1.1" transform="rotate(126 247.9 548.7)"/><ellipse cx="174.3" cy="445.4" rx="2.2" ry="1.2" transform="rotate(115 174.3 445.4)"/><ellipse cx="197.5" cy="227.3" rx="1.8" ry="1.1" transform="rotate(98 197.5 227.3)"/><ellipse cx="193.2" cy="401.8" rx="1.4" ry="1.2" transform="rotate(107 193.2 401.8)"/><ellipse cx="202.5" cy="288.3" rx="1.7" ry="0.8" transform="rotate(163 202.5 288.3)"/><ellipse cx="352.8" cy="366.9" rx="1.5" ry="0.8" transform="rotate(119 352.8 366.9)"/><ellipse cx="366.6" cy="345.5" rx="1.5" ry="1" transform="rotate(115 366.6 345.5)"/><ellipse cx="231.2" cy="260.9" rx="1.8" ry="1.1" transform="rotate(73 231.2 260.9)"/><ellipse cx="219.9" cy="528.9" rx="2.2" ry="0.7" transform="rotate(106 219.9 528.9)"/><ellipse cx="366.8" cy="299.4" rx="1.8" ry="1.3" transform="rotate(91 366.8 299.4)"/><ellipse cx="381.6" cy="344.7" rx="2.3" ry="1.1" transform="rotate(40 381.6 344.7)"/><ellipse cx="269.6" cy="415.5" rx="2.2" ry="1.1" transform="rotate(119 269.6 415.5)"/><ellipse cx="161.4" cy="249.2" rx="2.4" ry="1.1" transform="rotate(23 161.4 249.2)"/><ellipse cx="265.5" cy="495.8" rx="1" ry="0.9" transform="rotate(100 265.5 495.8)"/><ellipse cx="207.2" cy="361.5" rx="1.3" ry="0.8" transform="rotate(93 207.2 361.5)"/><ellipse cx="271.4" cy="590.6" rx="1.3" ry="0.9" transform="rotate(11 271.4 590.6)"/><ellipse cx="195.6" cy="274.4" rx="2.3" ry="0.8" transform="rotate(143 195.6 274.4)"/><ellipse cx="170.8" cy="285.9" rx="2" ry="0.8" transform="rotate(171 170.8 285.9)"/><ellipse cx="189.7" cy="351.4" rx="1.6" ry="1.2" transform="rotate(119 189.7 351.4)"/><ellipse cx="216.6" cy="252.3" rx="1.8" ry="1.1" transform="rotate(30 216.6 252.3)"/><ellipse cx="188.9" cy="354.1" rx="2.3" ry="1" transform="rotate(157 188.9 354.1)"/><ellipse cx="198" cy="334.3" rx="1.7" ry="1.2" transform="rotate(97 198 334.3)"/><ellipse cx="193.1" cy="268.6" rx="1.5" ry="0.7" transform="rotate(65 193.1 268.6)"/><ellipse cx="251.3" cy="487.3" rx="1.8" ry="0.8" transform="rotate(124 251.3 487.3)"/><ellipse cx="284.2" cy="409.5" rx="1.6" ry="0.7" transform="rotate(11 284.2 409.5)"/><ellipse cx="213.7" cy="247.4" rx="1.6" ry="1.1" transform="rotate(50 213.7 247.4)"/><ellipse cx="205" cy="272.5" rx="1.2" ry="0.8" transform="rotate(64 205 272.5)"/><ellipse cx="158.6" cy="426.6" rx="1.7" ry="1" transform="rotate(59 158.6 426.6)"/><ellipse cx="281.8" cy="416.7" rx="1" ry="1" transform="rotate(101 281.8 416.7)"/><ellipse cx="351.2" cy="359.5" rx="1.5" ry="0.8" transform="rotate(116 351.2 359.5)"/><ellipse cx="230.3" cy="267.7" rx="1.6" ry="1.2" transform="rotate(172 230.3 267.7)"/><ellipse cx="171.8" cy="312.4" rx="2.4" ry="0.9" transform="rotate(32 171.8 312.4)"/><ellipse cx="309.4" cy="498.9" rx="2.1" ry="0.9" transform="rotate(77 309.4 498.9)"/><ellipse cx="186.5" cy="395.3" rx="2.2" ry="0.7" transform="rotate(35 186.5 395.3)"/><ellipse cx="255.7" cy="434.9" rx="1.8" ry="0.9" transform="rotate(148 255.7 434.9)"/><ellipse cx="330.9" cy="341.8" rx="2.3" ry="0.9" transform="rotate(65 330.9 341.8)"/><ellipse cx="185.8" cy="347.1" rx="1.5" ry="0.9" transform="rotate(157 185.8 347.1)"/><ellipse cx="168.5" cy="373.7" rx="1.1" ry="1.1" transform="rotate(179 168.5 373.7)"/><ellipse cx="248.8" cy="483.7" rx="2.3" ry="0.9" transform="rotate(79 248.8 483.7)"/><ellipse cx="189.9" cy="260.3" rx="1.3" ry="0.8" transform="rotate(71 189.9 260.3)"/><ellipse cx="173.5" cy="324" rx="1.7" ry="0.7" transform="rotate(12 173.5 324)"/><ellipse cx="165.2" cy="435.2" rx="1.9" ry="1.3" transform="rotate(116 165.2 435.2)"/><ellipse cx="236" cy="565.6" rx="1.4" ry="0.8" transform="rotate(38 236 565.6)"/><ellipse cx="233.3" cy="238.7" rx="1.1" ry="1.2" transform="rotate(20 233.3 238.7)"/><ellipse cx="184.5" cy="509.5" rx="1.6" ry="1.1" transform="rotate(33 184.5 509.5)"/><ellipse cx="246.5" cy="569.2" rx="1.1" ry="0.8" transform="rotate(122 246.5 569.2)"/><ellipse cx="333" cy="398.9" rx="2.2" ry="0.8" transform="rotate(154 333 398.9)"/><ellipse cx="364.5" cy="388.3" rx="1.8" ry="1" transform="rotate(136 364.5 388.3)"/><ellipse cx="207.1" cy="564.5" rx="1.1" ry="1.2" transform="rotate(28 207.1 564.5)"/><ellipse cx="229.8" cy="429.6" rx="1.5" ry="0.8" transform="rotate(45 229.8 429.6)"/><ellipse cx="275.1" cy="513" rx="1.8" ry="1.1" transform="rotate(45 275.1 513)"/><ellipse cx="208.9" cy="215.7" rx="1.3" ry="1.1" transform="rotate(172 208.9 215.7)"/><ellipse cx="156.9" cy="346" rx="1.7" ry="1" transform="rotate(66 156.9 346)"/><ellipse cx="269" cy="590.4" rx="1.9" ry="0.9" transform="rotate(106 269 590.4)"/><ellipse cx="382.9" cy="349.5" rx="2.2" ry="1.1" transform="rotate(4 382.9 349.5)"/><ellipse cx="161.3" cy="214.1" rx="1.4" ry="1" transform="rotate(147 161.3 214.1)"/><ellipse cx="259.1" cy="520.9" rx="1.6" ry="1.2" transform="rotate(29 259.1 520.9)"/><ellipse cx="375.1" cy="398.8" rx="1.6" ry="0.9" transform="rotate(43 375.1 398.8)"/><ellipse cx="210.6" cy="515.8" rx="1.6" ry="1" transform="rotate(49 210.6 515.8)"/><ellipse cx="344.2" cy="394.3" rx="2" ry="1.1" transform="rotate(76 344.2 394.3)"/><ellipse cx="376" cy="322.8" rx="2" ry="0.9" transform="rotate(116 376 322.8)"/><ellipse cx="222" cy="397.2" rx="1.8" ry="1.3" transform="rotate(100 222 397.2)"/><ellipse cx="288.1" cy="469.5" rx="1.4" ry="1" transform="rotate(6 288.1 469.5)"/><ellipse cx="180.8" cy="450.9" rx="2.2" ry="1.2" transform="rotate(31 180.8 450.9)"/><ellipse cx="204.6" cy="366.2" rx="2.1" ry="1.1" transform="rotate(55 204.6 366.2)"/><ellipse cx="169.5" cy="308.1" rx="2.2" ry="0.9" transform="rotate(112 169.5 308.1)"/><ellipse cx="351" cy="355.3" rx="1.2" ry="1.1" transform="rotate(77 351 355.3)"/><ellipse cx="324.9" cy="363" rx="1.4" ry="0.7" transform="rotate(89 324.9 363)"/><ellipse cx="340.9" cy="318.5" rx="1.3" ry="1" transform="rotate(26 340.9 318.5)"/><ellipse cx="250.1" cy="427.5" rx="1.3" ry="0.7" transform="rotate(90 250.1 427.5)"/><ellipse cx="339" cy="324.4" rx="1.2" ry="0.7" transform="rotate(70 339 324.4)"/><ellipse cx="191" cy="273.6" rx="2" ry="1" transform="rotate(68 191 273.6)"/><ellipse cx="196.1" cy="376.3" rx="1" ry="0.7" transform="rotate(75 196.1 376.3)"/><ellipse cx="202.9" cy="325.9" rx="1.4" ry="1.3" transform="rotate(26 202.9 325.9)"/><ellipse cx="187.1" cy="419.6" rx="2" ry="1.2" transform="rotate(22 187.1 419.6)"/><ellipse cx="181.2" cy="381" rx="2.1" ry="1" transform="rotate(88 181.2 381)"/><ellipse cx="188.3" cy="468.5" rx="2.3" ry="1" transform="rotate(174 188.3 468.5)"/><ellipse cx="388.4" cy="353.8" rx="1.4" ry="1.1" transform="rotate(85 388.4 353.8)"/><ellipse cx="275" cy="461.4" rx="1.2" ry="0.8" transform="rotate(19 275 461.4)"/><ellipse cx="302.4" cy="491.7" rx="1.5" ry="0.8" transform="rotate(180 302.4 491.7)"/><ellipse cx="185.6" cy="261" rx="1.4" ry="1" transform="rotate(125 185.6 261)"/><ellipse cx="219.8" cy="548.5" rx="1.9" ry="1" transform="rotate(14 219.8 548.5)"/><ellipse cx="252.3" cy="569.8" rx="1.6" ry="1.1" transform="rotate(54 252.3 569.8)"/><ellipse cx="280.2" cy="582.8" rx="1.2" ry="0.8" transform="rotate(25 280.2 582.8)"/><ellipse cx="364.9" cy="298.5" rx="1.5" ry="1" transform="rotate(81 364.9 298.5)"/><ellipse cx="203.9" cy="370.1" rx="1.5" ry="0.9" transform="rotate(93 203.9 370.1)"/><ellipse cx="203" cy="404" rx="1.1" ry="1" transform="rotate(174 203 404)"/><ellipse cx="250.3" cy="500.1" rx="2" ry="0.8" transform="rotate(88 250.3 500.1)"/><ellipse cx="278.2" cy="550.6" rx="1.2" ry="0.9" transform="rotate(65 278.2 550.6)"/><ellipse cx="229.9" cy="582.2" rx="1.8" ry="1.2" transform="rotate(82 229.9 582.2)"/><ellipse cx="208.6" cy="492.8" rx="1.8" ry="1" transform="rotate(49 208.6 492.8)"/><ellipse cx="309.5" cy="372.8" rx="1.2" ry="0.8" transform="rotate(84 309.5 372.8)"/><ellipse cx="212" cy="262.5" rx="2" ry="0.9" transform="rotate(121 212 262.5)"/><ellipse cx="180.7" cy="267.3" rx="2.1" ry="0.8" transform="rotate(143 180.7 267.3)"/><ellipse cx="157.5" cy="446.9" rx="2.1" ry="1" transform="rotate(66 157.5 446.9)"/><ellipse cx="209.6" cy="543.5" rx="1.6" ry="0.8" transform="rotate(70 209.6 543.5)"/><ellipse cx="334.7" cy="448.6" rx="2.1" ry="1.3" transform="rotate(28 334.7 448.6)"/></g>
</g>
<g filter="url(#b1)">
<path d="M232 196 Q237 250 234 315 Q228 380 221 417" fill="none" stroke="#b1586f" stroke-width="6"/>
<path d="M372 272 Q340 320 300 371 Q280 396 262 424" fill="none" stroke="#b45b72" stroke-width="6"/>
<path d="M168 200 Q166 250 160 296" fill="none" stroke="#8e3f5a" stroke-width="2" stroke-dasharray="3 4" opacity="0.8"/>
<path d="M182 200 Q182 250 176 300 Q170 330 172 360" fill="none" stroke="#8e3f5a" stroke-width="2.500" stroke-dasharray="4 3" opacity="0.8"/>
<path d="M200 200 Q202 250 198 300 Q194 340 200 380" fill="none" stroke="#8e3f5a" stroke-width="2.500" stroke-dasharray="5 3" opacity="0.8"/>
<path d="M216 200 Q220 260 216 320 Q212 370 208 410" fill="none" stroke="#8e3f5a" stroke-width="2" stroke-dasharray="4 4" opacity="0.8"/>
<!-- lace band on left sleeve -->
<path d="M69 468 Q82 448 100 456 Q118 468 134 496 Q152 528 178 562 Q202 594 228 618 L216 634 L184 600 L150 562 L120 528 L84 520 Q64 500 69 468 Z" fill="#b9647d"/>
<!-- cuff -->
<path d="M217 634 Q236 616 258 608 Q274 604 284 613 Q280 636 264 648 L238 654 Z" fill="#c5778d"/>
<path d="M226 640 Q244 624 268 616" fill="none" stroke="#b45c7a" stroke-width="2" opacity="0.7"/>
<!-- right sleeve -->
<path d="M404 402 Q440 390 478 380 Q484 390 484 404 Q488 426 494 446 Q504 474 516 498 Q526 516 531 534 Q528 550 517 560 Q500 566 486 567 Q460 578 440 582 Q426 570 413 554 Q396 528 380 502 Q364 478 352 458 Q378 428 404 402 Z" fill="url(#gSleeveR)"/>
<path d="M442 392 Q460 384 478 382 Q484 392 484 406 Q488 428 494 448 Q504 476 516 500 Q526 516 530 534 Q526 550 516 558 L500 562 Q476 520 462 480 Q450 440 442 392 Z" fill="#ba667f"/>
<path d="M352 458 Q378 428 404 402 L414 410 Q392 440 372 470 Z" fill="#a24a68"/>
<path d="M404 402 Q440 390 478 380" fill="none" stroke="#d3889d" stroke-width="2.500" opacity="0.8"/>
</g>
<g clip-path="url(#cBandL)" filter="url(#b05)">
<path d="M146.3 555.6 a7.8 7.8 0 1 0 15.7 0 a7.8 7.8 0 1 0 -15.7 0 M213 614.4 a9.6 9.6 0 1 0 19.2 0 a9.6 9.6 0 1 0 -19.2 0 M120.9 519.3 a13 13 0 1 0 25.9 0 a13 13 0 1 0 -25.9 0 M109.9 496 a11.8 11.8 0 1 0 23.6 0 a11.8 11.8 0 1 0 -23.6 0 M127.2 539.8 a12.3 12.3 0 1 0 24.5 0 a12.3 12.3 0 1 0 -24.5 0 M166.1 572.2 a12.5 12.5 0 1 0 24.9 0 a12.5 12.5 0 1 0 -24.9 0 M96.8 513.6 a13.6 13.6 0 1 0 27.1 0 a13.6 13.6 0 1 0 -27.1 0 M152.1 564.8 a8.9 8.9 0 1 0 17.7 0 a8.9 8.9 0 1 0 -17.7 0 M192.6 609.4 a12 12 0 1 0 24 0 a12 12 0 1 0 -24 0 M114.4 510 a13.4 13.4 0 1 0 26.9 0 a13.4 13.4 0 1 0 -26.9 0 M208.7 614.7 q-3.1 2.5 -1.9 6.4 M77.7 460.6 q1.7 4.1 6.2 4 M139.5 521.7 q1.1 -2.3 -0.7 -4.2 M123.4 493.2 q1.4 -3.2 -1 -5.7 M100.8 483.2 q3.8 -0.4 4.9 -4.1 M79.7 507.8 q2 -3.8 -0.9 -7.1 M102.3 471.3 q0.4 2.6 3 3.2 M87.1 462.1 q-3 -3.5 -7.4 -2 M75.9 477 q-1.8 1.7 -0.9 4 M205.8 623.1 q1.8 2 4.3 1 M157 538.9 q4.1 1.7 7.2 -1.4 M82.2 504.1 q-3 -0.2 -4.2 2.6 M172.3 554.9 q-4 -0.5 -5.9 3 M70.9 471.3 q1.5 4.5 6.4 4.8 M195.2 604.5 q-0.7 -2.6 -3.4 -3 M127.7 513 q0.9 3.7 4.7 4.3 M86.9 465.4 q-3.3 -1.2 -5.7 1.5 M140.2 536.1 q-3.2 -0.5 -4.8 2.3 M133.9 542.8 q1.2 -4.9 -3 -7.9 M151 549.6 q1.9 -2.6 0.1 -5.3 M91.2 489.8 q3.7 2.3 7.2 -0.3 M113.4 512 q4.6 1.2 7.5 -2.8" fill="none" stroke="#d690a6" stroke-width="1.100" opacity="0.27"/>
<g fill="#8c405a"><ellipse cx="155.5" cy="560.4" rx="1.8" ry="1.4" transform="rotate(73 155.5 560.4)"/><ellipse cx="224.2" cy="620.4" rx="2.7" ry="1.1" transform="rotate(75 224.2 620.4)"/><ellipse cx="220.9" cy="608.5" rx="2" ry="1.4" transform="rotate(255 220.9 608.5)"/><ellipse cx="226.9" cy="610" rx="2.4" ry="1" transform="rotate(315 226.9 610)"/><ellipse cx="136.9" cy="527" rx="1.7" ry="1" transform="rotate(68 136.9 527)"/><ellipse cx="130.8" cy="511.5" rx="2.5" ry="1.4" transform="rotate(248 130.8 511.5)"/><ellipse cx="129.2" cy="497.4" rx="2.7" ry="0.9" transform="rotate(10 129.2 497.4)"/><ellipse cx="114.9" cy="499.4" rx="2.3" ry="1" transform="rotate(154 114.9 499.4)"/><ellipse cx="131.7" cy="541.3" rx="2.4" ry="1.2" transform="rotate(169 131.7 541.3)"/><ellipse cx="142.1" cy="532.3" rx="2.5" ry="1.4" transform="rotate(289 142.1 532.3)"/><ellipse cx="147.3" cy="538.4" rx="1.7" ry="1.4" transform="rotate(349 147.3 538.4)"/><ellipse cx="177" cy="580.1" rx="2.4" ry="1.4" transform="rotate(101 177 580.1)"/><ellipse cx="170.9" cy="574.8" rx="2.5" ry="1.3" transform="rotate(161 170.9 574.8)"/><ellipse cx="186.1" cy="569.5" rx="2.5" ry="1.1" transform="rotate(341 186.1 569.5)"/><ellipse cx="105.6" cy="520.9" rx="2.1" ry="1.1" transform="rotate(123 105.6 520.9)"/><ellipse cx="106.4" cy="505.8" rx="1.8" ry="1.1" transform="rotate(243 106.4 505.8)"/><ellipse cx="155.3" cy="564.2" rx="2.3" ry="1.1" transform="rotate(187 155.3 564.2)"/><ellipse cx="162.9" cy="559.4" rx="1.8" ry="1.3" transform="rotate(290 162.9 559.4)"/><ellipse cx="166.4" cy="563" rx="1.6" ry="1.1" transform="rotate(341 166.4 563)"/><ellipse cx="212.1" cy="611.5" rx="2.8" ry="1.3" transform="rotate(376 212.1 611.5)"/><ellipse cx="135.7" cy="513.7" rx="2.4" ry="1.4" transform="rotate(25 135.7 513.7)"/><ellipse cx="129.8" cy="518.4" rx="2.1" ry="1.5" transform="rotate(77 129.8 518.4)"/><ellipse cx="122.5" cy="516.8" rx="1.9" ry="1.5" transform="rotate(128 122.5 516.8)"/><ellipse cx="122.4" cy="503.3" rx="2.3" ry="1.1" transform="rotate(231 122.4 503.3)"/><ellipse cx="129.7" cy="501.5" rx="2.2" ry="1.1" transform="rotate(282 129.7 501.5)"/><ellipse cx="135.6" cy="506.2" rx="2.7" ry="1.1" transform="rotate(334 135.6 506.2)"/><ellipse cx="141.2" cy="516.4" rx="2" ry="1.1" transform="rotate(7 141.2 516.4)"/><ellipse cx="205.1" cy="604.8" rx="1.7" ry="1.1" transform="rotate(130 205.1 604.8)"/><ellipse cx="123.4" cy="493.2" rx="1.5" ry="1.1" transform="rotate(63 123.4 493.2)"/><ellipse cx="74.7" cy="494.8" rx="1.1" ry="0.9" transform="rotate(11 74.7 494.8)"/><ellipse cx="102.3" cy="471.3" rx="1.4" ry="0.8" transform="rotate(139 102.3 471.3)"/><ellipse cx="87.1" cy="462.1" rx="1.2" ry="0.9" transform="rotate(122 87.1 462.1)"/><ellipse cx="70.5" cy="472.4" rx="2.4" ry="1.2" transform="rotate(78 70.5 472.4)"/><ellipse cx="129" cy="508.4" rx="1" ry="0.9" transform="rotate(69 129 508.4)"/><ellipse cx="172.3" cy="554.9" rx="1.9" ry="1.1" transform="rotate(98 172.3 554.9)"/><ellipse cx="195.2" cy="604.5" rx="1" ry="1.1" transform="rotate(20 195.2 604.5)"/><ellipse cx="82.7" cy="468.9" rx="1.1" ry="0.8" transform="rotate(67 82.7 468.9)"/><ellipse cx="109.9" cy="467.7" rx="1.7" ry="1.3" transform="rotate(97 109.9 467.7)"/><ellipse cx="80.2" cy="512.9" rx="1.2" ry="1.3" transform="rotate(47 80.2 512.9)"/><ellipse cx="165" cy="574" rx="1.9" ry="0.7" transform="rotate(74 165 574)"/><ellipse cx="151" cy="549.6" rx="2.2" ry="1.3" transform="rotate(122 151 549.6)"/></g>
<g fill="#9a4a64"><ellipse cx="149.9" cy="558.5" rx="1.8" ry="1.4" transform="rotate(145 149.9 558.5)"/><ellipse cx="150.1" cy="552.5" rx="2.3" ry="1.2" transform="rotate(217 150.1 552.5)"/><ellipse cx="155.8" cy="550.8" rx="1.6" ry="1.4" transform="rotate(289 155.8 550.8)"/><ellipse cx="159.1" cy="555.7" rx="2.5" ry="1.5" transform="rotate(361 159.1 555.7)"/><ellipse cx="218.2" cy="618.9" rx="2" ry="1.3" transform="rotate(135 218.2 618.9)"/><ellipse cx="216.6" cy="612.9" rx="2.3" ry="1.3" transform="rotate(195 216.6 612.9)"/><ellipse cx="228.6" cy="616" rx="2.4" ry="0.9" transform="rotate(375 228.6 616)"/><ellipse cx="142.1" cy="520.5" rx="1.8" ry="1.5" transform="rotate(8 142.1 520.5)"/><ellipse cx="139" cy="512.7" rx="1.6" ry="1.5" transform="rotate(308 139 512.7)"/><ellipse cx="116.4" cy="490.6" rx="1.7" ry="1.2" transform="rotate(226 116.4 490.6)"/><ellipse cx="125.3" cy="489.3" rx="1.7" ry="1.2" transform="rotate(298 125.3 489.3)"/><ellipse cx="144.6" cy="545.8" rx="2.2" ry="1.4" transform="rotate(49 144.6 545.8)"/><ellipse cx="136.9" cy="547.3" rx="2.1" ry="1.5" transform="rotate(109 136.9 547.3)"/><ellipse cx="172.4" cy="566.9" rx="2.7" ry="1.1" transform="rotate(221 172.4 566.9)"/><ellipse cx="101.6" cy="513.1" rx="2.2" ry="1.2" transform="rotate(183 101.6 513.1)"/><ellipse cx="165.8" cy="567.9" rx="2.5" ry="1.5" transform="rotate(32 165.8 567.9)"/><ellipse cx="161.6" cy="570.5" rx="1.8" ry="1.4" transform="rotate(84 161.6 570.5)"/><ellipse cx="156.9" cy="568.9" rx="2" ry="1" transform="rotate(135 156.9 568.9)"/><ellipse cx="207.6" cy="616.6" rx="1.6" ry="1.3" transform="rotate(67 207.6 616.6)"/><ellipse cx="197" cy="610.7" rx="2" ry="1.1" transform="rotate(170 197 610.7)"/><ellipse cx="205.1" cy="601.7" rx="2.2" ry="1.2" transform="rotate(273 205.1 601.7)"/><ellipse cx="211" cy="604.9" rx="2.3" ry="1.2" transform="rotate(324 211 604.9)"/><ellipse cx="119.2" cy="510.1" rx="2.1" ry="1.4" transform="rotate(180 119.2 510.1)"/><ellipse cx="89.2" cy="454.4" rx="1.9" ry="1.3" transform="rotate(44 89.2 454.4)"/><ellipse cx="77.7" cy="460.6" rx="1.8" ry="1.1" transform="rotate(158 77.7 460.6)"/><ellipse cx="101.7" cy="461.6" rx="1.3" ry="1.2" transform="rotate(51 101.7 461.6)"/><ellipse cx="100.8" cy="483.2" rx="1.1" ry="0.7" transform="rotate(34 100.8 483.2)"/><ellipse cx="91.1" cy="479.3" rx="1.5" ry="0.9" transform="rotate(158 91.1 479.3)"/><ellipse cx="172.3" cy="563.6" rx="2.3" ry="1.1" transform="rotate(122 172.3 563.6)"/><ellipse cx="207.8" cy="624.8" rx="1.3" ry="1.1" transform="rotate(115 207.8 624.8)"/><ellipse cx="137.5" cy="515.8" rx="1.6" ry="1.2" transform="rotate(94 137.5 515.8)"/><ellipse cx="105.7" cy="465.5" rx="1.6" ry="1" transform="rotate(44 105.7 465.5)"/><ellipse cx="87.3" cy="455.2" rx="1.2" ry="1.1" transform="rotate(141 87.3 455.2)"/><ellipse cx="135.5" cy="516.7" rx="1.5" ry="0.7" transform="rotate(105 135.5 516.7)"/><ellipse cx="72.1" cy="481.2" rx="1.1" ry="1.1" transform="rotate(162 72.1 481.2)"/><ellipse cx="142.2" cy="548.2" rx="1.1" ry="0.8" transform="rotate(124 142.2 548.2)"/><ellipse cx="82.2" cy="504.1" rx="2.1" ry="1.2" transform="rotate(14 82.2 504.1)"/><ellipse cx="70.9" cy="471.3" rx="1.8" ry="1.1" transform="rotate(33 70.9 471.3)"/><ellipse cx="86.9" cy="465.4" rx="2.1" ry="0.8" transform="rotate(146 86.9 465.4)"/><ellipse cx="134.3" cy="499.8" rx="1.7" ry="0.9" transform="rotate(120 134.3 499.8)"/><ellipse cx="140.2" cy="536.1" rx="1.1" ry="0.9" transform="rotate(111 140.2 536.1)"/><ellipse cx="126.7" cy="517.8" rx="1.7" ry="1" transform="rotate(174 126.7 517.8)"/><ellipse cx="89.3" cy="472.9" rx="1.4" ry="0.7" transform="rotate(45 89.3 472.9)"/><ellipse cx="105.8" cy="498.5" rx="2.2" ry="1" transform="rotate(162 105.8 498.5)"/><ellipse cx="165" cy="562.6" rx="1.3" ry="1.3" transform="rotate(20 165 562.6)"/><ellipse cx="91.2" cy="489.8" rx="1.4" ry="1.3" transform="rotate(37 91.2 489.8)"/><ellipse cx="136.9" cy="545.3" rx="1.6" ry="0.8" transform="rotate(165 136.9 545.3)"/><ellipse cx="113.4" cy="512" rx="2.4" ry="0.9" transform="rotate(12 113.4 512)"/><ellipse cx="217.2" cy="624.1" rx="1.7" ry="0.8" transform="rotate(138 217.2 624.1)"/></g>
<g fill="#a4506c"><ellipse cx="128.7" cy="525.8" rx="2" ry="1.1" transform="rotate(128 128.7 525.8)"/><ellipse cx="125.6" cy="518" rx="1.9" ry="1.2" transform="rotate(188 125.6 518)"/><ellipse cx="122.8" cy="503.6" rx="2" ry="1" transform="rotate(82 122.8 503.6)"/><ellipse cx="134.3" cy="533.8" rx="1.8" ry="1.2" transform="rotate(229 134.3 533.8)"/><ellipse cx="180" cy="564.3" rx="2.3" ry="0.9" transform="rotate(281 180 564.3)"/><ellipse cx="184.6" cy="577.4" rx="2.2" ry="1.4" transform="rotate(401 184.6 577.4)"/><ellipse cx="114.3" cy="521.4" rx="2.6" ry="1.4" transform="rotate(63 114.3 521.4)"/><ellipse cx="115.1" cy="506.2" rx="1.9" ry="0.9" transform="rotate(303 115.1 506.2)"/><ellipse cx="119.1" cy="514" rx="2.5" ry="1" transform="rotate(363 119.1 514)"/><ellipse cx="158" cy="560" rx="2.1" ry="1.3" transform="rotate(238 158 560)"/><ellipse cx="200.9" cy="616.2" rx="2" ry="1.2" transform="rotate(119 200.9 616.2)"/><ellipse cx="198.8" cy="604.3" rx="2.1" ry="1.4" transform="rotate(222 198.8 604.3)"/><ellipse cx="105.8" cy="499.3" rx="1.2" ry="1.3" transform="rotate(53 105.8 499.3)"/><ellipse cx="208.7" cy="614.7" rx="1" ry="0.8" transform="rotate(51 208.7 614.7)"/><ellipse cx="160.3" cy="569.3" rx="1.7" ry="0.9" transform="rotate(30 160.3 569.3)"/><ellipse cx="88.4" cy="504.2" rx="1.8" ry="1.1" transform="rotate(52 88.4 504.2)"/><ellipse cx="139.5" cy="521.7" rx="1.6" ry="1.3" transform="rotate(19 139.5 521.7)"/><ellipse cx="79.7" cy="507.8" rx="1.2" ry="1" transform="rotate(166 79.7 507.8)"/><ellipse cx="140.7" cy="529.9" rx="1.6" ry="1.2" transform="rotate(169 140.7 529.9)"/><ellipse cx="189.9" cy="594.5" rx="1.5" ry="1.2" transform="rotate(147 189.9 594.5)"/><ellipse cx="75.9" cy="477" rx="1.6" ry="1.3" transform="rotate(4 75.9 477)"/><ellipse cx="205.8" cy="623.1" rx="1.6" ry="1.3" transform="rotate(3 205.8 623.1)"/><ellipse cx="157" cy="538.9" rx="1.1" ry="0.8" transform="rotate(62 157 538.9)"/><ellipse cx="188.8" cy="585.5" rx="2.1" ry="1.2" transform="rotate(128 188.8 585.5)"/><ellipse cx="127.7" cy="513" rx="2" ry="1" transform="rotate(169 127.7 513)"/><ellipse cx="137.7" cy="536.8" rx="1.1" ry="0.9" transform="rotate(172 137.7 536.8)"/><ellipse cx="69.6" cy="479.4" rx="2.1" ry="1" transform="rotate(155 69.6 479.4)"/><ellipse cx="88.8" cy="453.2" rx="1" ry="0.9" transform="rotate(43 88.8 453.2)"/><ellipse cx="133.9" cy="542.8" rx="1.9" ry="1.2" transform="rotate(10 133.9 542.8)"/><ellipse cx="160.5" cy="559.3" rx="1.5" ry="0.9" transform="rotate(152 160.5 559.3)"/><ellipse cx="83.5" cy="497.7" rx="1.5" ry="1.2" transform="rotate(48 83.5 497.7)"/></g>
</g>
<g clip-path="url(#cBandR)" filter="url(#b05)">
<path d="M474.1 449.2 a8.6 8.6 0 1 0 17.2 0 a8.6 8.6 0 1 0 -17.2 0 M511.1 547.4 a9 9 0 1 0 18 0 a9 9 0 1 0 -18 0 M468.7 497 a8.3 8.3 0 1 0 16.7 0 a8.3 8.3 0 1 0 -16.7 0 M478.6 505.8 a13.1 13.1 0 1 0 26.3 0 a13.1 13.1 0 1 0 -26.3 0 M458.1 433.3 a11 11 0 1 0 21.9 0 a11 11 0 1 0 -21.9 0 M442.2 434.3 a12 12 0 1 0 24.1 0 a12 12 0 1 0 -24.1 0 M457.7 403.2 a10.4 10.4 0 1 0 20.7 0 a10.4 10.4 0 1 0 -20.7 0 M472.5 488.5 a11.1 11.1 0 1 0 22.3 0 a11.1 11.1 0 1 0 -22.3 0 M439.1 422.4 a8.6 8.6 0 1 0 17.2 0 a8.6 8.6 0 1 0 -17.2 0 M486.3 480.5 a10.7 10.7 0 1 0 21.4 0 a10.7 10.7 0 1 0 -21.4 0 M483.9 438.7 q4.2 -3.2 2.8 -8.4 M511.2 544.3 q-3.6 -0.8 -5.6 2.3 M470.3 483.4 q-4 -1.5 -6.8 1.7 M492 461.2 q2.2 2.1 5 0.8 M494.8 551.3 q0.4 -3.6 -3 -5.3 M509.2 525.9 q-2.3 4.9 1.5 8.8 M510.5 502.4 q-3.9 -0.5 -5.8 3.1 M476.8 395.7 q-0.3 2.8 2.2 4.2 M500.7 476.2 q-5.2 0.8 -6.4 6.1 M452.9 437.9 q-0.3 -3.4 -3.6 -4.3 M460.5 390.4 q3.5 -3.8 1.2 -8.4 M479.5 413.7 q0.3 -5.1 -4.4 -7.2 M472.7 474.8 q-2.8 2.4 -1.6 6 M473.6 513 q3.5 1.1 5.8 -1.7 M499 525.8 q-1.8 2.4 -0.3 5 M494 496.2 q2.2 -1.8 1.4 -4.6 M515.2 540.9 q4.7 -0.5 6.1 -5.1 M486 490 q-4.4 2 -4.1 6.9 M489.9 499.6 q2.6 4 7.4 3.1 M509 509.6 q1.3 -2.7 -0.7 -4.9 M517 519.7 q1.9 1.8 4.2 0.7 M480.9 466.8 q-0.8 3.7 2.4 5.8 M464.7 472.1 q-0.4 -4.9 -5.2 -6.3 M487.2 438.6 q5.2 -0.4 6.7 -5.4 M513.8 495.7 q1.7 -3.3 -0.8 -6.2 M465.3 424.2 q-3.8 2.1 -3.3 6.5 M476.9 434.7 q-0 -3.9 -3.6 -5.3 M463.6 483.9 q-3.1 2.1 -2.3 5.9 M486.5 440.3 q2.1 3.1 5.8 2.2" fill="none" stroke="#d690a6" stroke-width="1.100" opacity="0.27"/>
<g fill="#9a4a64"><ellipse cx="488.3" cy="449.3" rx="2.2" ry="1.4" transform="rotate(1 488.3 449.3)"/><ellipse cx="477.8" cy="446.7" rx="1.8" ry="1" transform="rotate(207 477.8 446.7)"/><ellipse cx="520.5" cy="541.6" rx="2.6" ry="1" transform="rotate(275 520.5 541.6)"/><ellipse cx="523.1" cy="552.4" rx="2.6" ry="1" transform="rotate(419 523.1 552.4)"/><ellipse cx="481.9" cy="499.3" rx="2.7" ry="1.3" transform="rotate(26 481.9 499.3)"/><ellipse cx="471.7" cy="496.9" rx="2.8" ry="1.5" transform="rotate(180 471.7 496.9)"/><ellipse cx="473.7" cy="492.7" rx="2.6" ry="1.1" transform="rotate(232 473.7 492.7)"/><ellipse cx="500" cy="507.5" rx="1.6" ry="1" transform="rotate(372 500 507.5)"/><ellipse cx="492.7" cy="514.2" rx="2.1" ry="1.1" transform="rotate(444 492.7 514.2)"/><ellipse cx="463" cy="437" rx="2.5" ry="1.2" transform="rotate(149 463 437)"/><ellipse cx="458.7" cy="427.9" rx="1.8" ry="1.2" transform="rotate(305 458.7 427.9)"/><ellipse cx="464.1" cy="408.6" rx="2.5" ry="1.1" transform="rotate(127 464.1 408.6)"/><ellipse cx="468.1" cy="396.5" rx="2.7" ry="1.2" transform="rotate(271 468.1 396.5)"/><ellipse cx="474.4" cy="401.2" rx="2.7" ry="1.1" transform="rotate(343 474.4 401.2)"/><ellipse cx="471.9" cy="408.7" rx="1.8" ry="1.3" transform="rotate(415 471.9 408.7)"/><ellipse cx="442.4" cy="420.7" rx="2.5" ry="1.3" transform="rotate(198 442.4 420.7)"/><ellipse cx="447.7" cy="416.8" rx="2" ry="1.4" transform="rotate(270 447.7 416.8)"/><ellipse cx="450.9" cy="426.9" rx="2.3" ry="1.4" transform="rotate(414 450.9 426.9)"/><ellipse cx="491.7" cy="484.9" rx="2" ry="1.4" transform="rotate(140 491.7 484.9)"/><ellipse cx="490.2" cy="479.1" rx="2.2" ry="1.2" transform="rotate(191 490.2 479.1)"/><ellipse cx="493.8" cy="474.3" rx="2.8" ry="1.5" transform="rotate(242 493.8 474.3)"/><ellipse cx="499.8" cy="474.2" rx="1.7" ry="1.1" transform="rotate(294 499.8 474.2)"/><ellipse cx="503.6" cy="478.7" rx="2.1" ry="1" transform="rotate(345 503.6 478.7)"/><ellipse cx="502.5" cy="484.6" rx="1.7" ry="0.9" transform="rotate(397 502.5 484.6)"/><ellipse cx="483.9" cy="438.7" rx="2.2" ry="1.1" transform="rotate(123 483.9 438.7)"/><ellipse cx="511.2" cy="544.3" rx="2.3" ry="1.2" transform="rotate(166 511.2 544.3)"/><ellipse cx="470.3" cy="483.4" rx="2.2" ry="1.2" transform="rotate(77 470.3 483.4)"/><ellipse cx="492" cy="461.2" rx="1.3" ry="0.9" transform="rotate(59 492 461.2)"/><ellipse cx="465.8" cy="439.7" rx="1.5" ry="0.8" transform="rotate(110 465.8 439.7)"/><ellipse cx="498.9" cy="465.4" rx="2.3" ry="0.8" transform="rotate(155 498.9 465.4)"/><ellipse cx="471.1" cy="396.8" rx="2.1" ry="1.3" transform="rotate(51 471.1 396.8)"/><ellipse cx="481.3" cy="412.8" rx="2.2" ry="0.9" transform="rotate(177 481.3 412.8)"/><ellipse cx="500.5" cy="466" rx="1.6" ry="0.8" transform="rotate(48 500.5 466)"/><ellipse cx="449.4" cy="397.3" rx="1.5" ry="1" transform="rotate(66 449.4 397.3)"/><ellipse cx="465.5" cy="410.9" rx="2.1" ry="0.8" transform="rotate(43 465.5 410.9)"/><ellipse cx="466.8" cy="403.2" rx="1.3" ry="1" transform="rotate(101 466.8 403.2)"/><ellipse cx="516.4" cy="551.9" rx="1.4" ry="0.8" transform="rotate(61 516.4 551.9)"/><ellipse cx="512.9" cy="497.9" rx="1.8" ry="1" transform="rotate(176 512.9 497.9)"/><ellipse cx="482.4" cy="501.5" rx="2" ry="1.1" transform="rotate(107 482.4 501.5)"/><ellipse cx="487.2" cy="438.6" rx="1.2" ry="0.7" transform="rotate(8 487.2 438.6)"/><ellipse cx="465.3" cy="424.2" rx="1.4" ry="1.2" transform="rotate(72 465.3 424.2)"/><ellipse cx="463.6" cy="483.9" rx="1.5" ry="1.2" transform="rotate(170 463.6 483.9)"/><ellipse cx="486.5" cy="440.3" rx="1.8" ry="1" transform="rotate(33 486.5 440.3)"/></g>
<g fill="#a4506c"><ellipse cx="486.1" cy="453.6" rx="2" ry="1.5" transform="rotate(53 486.1 453.6)"/><ellipse cx="481.4" cy="454.6" rx="1.6" ry="1.1" transform="rotate(104 481.4 454.6)"/><ellipse cx="481.6" cy="443.8" rx="1.8" ry="1.4" transform="rotate(258 481.6 443.8)"/><ellipse cx="486.3" cy="444.9" rx="1.7" ry="1.3" transform="rotate(310 486.3 444.9)"/><ellipse cx="478.2" cy="502.2" rx="1.7" ry="1.2" transform="rotate(78 478.2 502.2)"/><ellipse cx="473.7" cy="501.1" rx="2.6" ry="1.3" transform="rotate(129 473.7 501.1)"/><ellipse cx="478.3" cy="491.7" rx="1.8" ry="1.2" transform="rotate(283 478.3 491.7)"/><ellipse cx="481.9" cy="494.7" rx="2" ry="1.3" transform="rotate(335 481.9 494.7)"/><ellipse cx="486" cy="499.5" rx="1.8" ry="1.5" transform="rotate(228 486 499.5)"/><ellipse cx="470.7" cy="440.2" rx="2" ry="1.4" transform="rotate(77 470.7 440.2)"/><ellipse cx="463.7" cy="428.7" rx="1.7" ry="1.4" transform="rotate(221 463.7 428.7)"/><ellipse cx="457.5" cy="441.3" rx="2.7" ry="1.5" transform="rotate(65 457.5 441.3)"/><ellipse cx="446.5" cy="433.5" rx="1.9" ry="1.1" transform="rotate(185 446.5 433.5)"/><ellipse cx="461.7" cy="401.1" rx="2.4" ry="1.1" transform="rotate(199 461.7 401.1)"/><ellipse cx="489.8" cy="492.2" rx="2.2" ry="1.5" transform="rotate(31 489.8 492.2)"/><ellipse cx="482" cy="495.5" rx="1.7" ry="1.3" transform="rotate(103 482 495.5)"/><ellipse cx="476.5" cy="489.1" rx="2.8" ry="1.4" transform="rotate(175 476.5 489.1)"/><ellipse cx="480.9" cy="481.9" rx="2" ry="1.2" transform="rotate(247 480.9 481.9)"/><ellipse cx="489.1" cy="483.8" rx="2.7" ry="0.9" transform="rotate(319 489.1 483.8)"/><ellipse cx="444.4" cy="426.9" rx="2.1" ry="1.2" transform="rotate(126 444.4 426.9)"/><ellipse cx="452.9" cy="420.6" rx="2" ry="1.5" transform="rotate(342 452.9 420.6)"/><ellipse cx="509.2" cy="525.9" rx="1.7" ry="1" transform="rotate(1 509.2 525.9)"/><ellipse cx="521.9" cy="517.8" rx="1.4" ry="0.8" transform="rotate(81 521.9 517.8)"/><ellipse cx="510.5" cy="502.4" rx="1.1" ry="0.8" transform="rotate(38 510.5 502.4)"/><ellipse cx="520.2" cy="520.1" rx="2.4" ry="0.8" transform="rotate(96 520.2 520.1)"/><ellipse cx="501" cy="557.5" rx="1.2" ry="0.7" transform="rotate(154 501 557.5)"/><ellipse cx="476.8" cy="395.7" rx="2.2" ry="0.8" transform="rotate(84 476.8 395.7)"/><ellipse cx="500.7" cy="476.2" rx="1.8" ry="1.2" transform="rotate(142 500.7 476.2)"/><ellipse cx="476.9" cy="433.4" rx="1.7" ry="0.8" transform="rotate(153 476.9 433.4)"/><ellipse cx="483.4" cy="491.4" rx="1.3" ry="1.1" transform="rotate(93 483.4 491.4)"/><ellipse cx="475.5" cy="431.3" rx="2.4" ry="0.8" transform="rotate(159 475.5 431.3)"/><ellipse cx="479.1" cy="414.7" rx="1.4" ry="0.9" transform="rotate(131 479.1 414.7)"/><ellipse cx="494" cy="496.2" rx="1.7" ry="0.8" transform="rotate(73 494 496.2)"/><ellipse cx="503.5" cy="519.7" rx="1.2" ry="0.7" transform="rotate(157 503.5 519.7)"/><ellipse cx="509" cy="509.6" rx="2" ry="0.7" transform="rotate(155 509 509.6)"/><ellipse cx="517" cy="519.7" rx="2" ry="1.3" transform="rotate(167 517 519.7)"/><ellipse cx="491.7" cy="464.6" rx="1.6" ry="1.3" transform="rotate(108 491.7 464.6)"/><ellipse cx="476.9" cy="434.7" rx="1.8" ry="0.7" transform="rotate(128 476.9 434.7)"/><ellipse cx="469.6" cy="424.3" rx="2.3" ry="1.3" transform="rotate(129 469.6 424.3)"/></g>
<g fill="#8c405a"><ellipse cx="477.7" cy="451.5" rx="2.7" ry="1.5" transform="rotate(155 477.7 451.5)"/><ellipse cx="516.3" cy="551.8" rx="2.1" ry="1" transform="rotate(131 516.3 551.8)"/><ellipse cx="514.7" cy="545.2" rx="2.7" ry="1.1" transform="rotate(203 514.7 545.2)"/><ellipse cx="525.7" cy="546.1" rx="2.7" ry="0.9" transform="rotate(347 525.7 546.1)"/><ellipse cx="484" cy="509.3" rx="2.3" ry="1.2" transform="rotate(156 484 509.3)"/><ellipse cx="495.9" cy="498.4" rx="1.6" ry="1.4" transform="rotate(300 495.9 498.4)"/><ellipse cx="476.1" cy="433.8" rx="2.5" ry="1.4" transform="rotate(5 476.1 433.8)"/><ellipse cx="471.7" cy="426.8" rx="2" ry="1.4" transform="rotate(293 471.7 426.8)"/><ellipse cx="462" cy="435" rx="2.7" ry="1.4" transform="rotate(5 462 435)"/><ellipse cx="449.8" cy="440.6" rx="1.8" ry="0.9" transform="rotate(125 449.8 440.6)"/><ellipse cx="451" cy="427.2" rx="1.6" ry="1.4" transform="rotate(245 451 427.2)"/><ellipse cx="497.2" cy="487.4" rx="2.7" ry="1.5" transform="rotate(448 497.2 487.4)"/><ellipse cx="494.8" cy="551.3" rx="1.9" ry="0.9" transform="rotate(125 494.8 551.3)"/><ellipse cx="469.7" cy="398.5" rx="1.5" ry="1.1" transform="rotate(92 469.7 398.5)"/><ellipse cx="457.8" cy="408.4" rx="2" ry="1.1" transform="rotate(9 457.8 408.4)"/><ellipse cx="473.2" cy="449" rx="1.5" ry="1.2" transform="rotate(160 473.2 449)"/><ellipse cx="487.1" cy="471.7" rx="1.4" ry="0.9" transform="rotate(139 487.1 471.7)"/><ellipse cx="452.9" cy="437.9" rx="1.3" ry="0.8" transform="rotate(115 452.9 437.9)"/><ellipse cx="460.5" cy="390.4" rx="1" ry="1.2" transform="rotate(128 460.5 390.4)"/><ellipse cx="479.5" cy="413.7" rx="1.3" ry="0.8" transform="rotate(103 479.5 413.7)"/><ellipse cx="472.7" cy="474.8" rx="2.3" ry="0.7" transform="rotate(175 472.7 474.8)"/><ellipse cx="473.6" cy="513" rx="1.9" ry="0.9" transform="rotate(66 473.6 513)"/><ellipse cx="499" cy="525.8" rx="1.9" ry="1" transform="rotate(3 499 525.8)"/><ellipse cx="478.3" cy="471.5" rx="1.2" ry="1" transform="rotate(127 478.3 471.5)"/><ellipse cx="495.6" cy="527.5" rx="1.1" ry="0.9" transform="rotate(81 495.6 527.5)"/><ellipse cx="515.2" cy="540.9" rx="1.8" ry="0.7" transform="rotate(139 515.2 540.9)"/><ellipse cx="474.8" cy="422.1" rx="2" ry="1.3" transform="rotate(134 474.8 422.1)"/><ellipse cx="486" cy="490" rx="2.1" ry="0.9" transform="rotate(98 486 490)"/><ellipse cx="489.9" cy="499.6" rx="1" ry="1" transform="rotate(123 489.9 499.6)"/><ellipse cx="495.6" cy="494.8" rx="1.6" ry="1" transform="rotate(129 495.6 494.8)"/><ellipse cx="484.1" cy="456.8" rx="1.4" ry="1.1" transform="rotate(27 484.1 456.8)"/><ellipse cx="480.9" cy="466.8" rx="1.3" ry="1" transform="rotate(85 480.9 466.8)"/><ellipse cx="464.7" cy="472.1" rx="1.6" ry="0.8" transform="rotate(141 464.7 472.1)"/><ellipse cx="513.8" cy="495.7" rx="2" ry="1.1" transform="rotate(3 513.8 495.7)"/><ellipse cx="472.6" cy="468.9" rx="1.9" ry="1.3" transform="rotate(172 472.6 468.9)"/></g>
</g>
<!-- lacing -->
<g stroke="#b86a84" stroke-width="1.600" fill="none">
  <path d="M222 418 L262 424 M222 418 L246 446 M262 424 L218 444 M218 444 L246 446 M218 444 L230 470 M246 446 L212 468 M212 468 L230 470"/>
</g>
<g fill="#d6d2cf"><circle cx="222" cy="418" r="1.700"/><circle cx="262" cy="424" r="1.700"/><circle cx="246" cy="446" r="1.700"/><circle cx="218" cy="444" r="1.700"/><circle cx="230" cy="470" r="1.700"/><circle cx="212" cy="468" r="1.700"/></g>
<!-- ===== jeans ===== -->
<g filter="url(#b1)">
<path d="M0 566 Q6 550 13 541 Q24 528 39 518 Q56 513 76 512 Q98 515 117 526 Q134 541 152 561 Q168 580 184 598 Q200 616 217 634 Q228 644 238 652 Q250 664 262 682 L300 700 L300 749 L0 749 Z" fill="url(#gKneeL)"/>
<path d="M262 640 Q282 628 300 622 Q344 612 387 602 Q420 590 452 576 Q486 566 517 563 Q534 562 549 567 Q566 576 577 591 Q585 606 586 621 Q586 644 580 663 Q572 678 560 689 Q540 702 517 712 Q502 718 489 723 L486 749 L190 749 Q200 730 230 712 Q250 690 262 640 Z" fill="url(#gKneeR)"/>
<path d="M0 700 Q40 688 90 698 Q140 708 190 730 L200 749 L0 749 Z" fill="#15233b" opacity="0.75"/>
<path d="M0 617 Q28 622 54 634 Q92 654 130 678 Q164 698 195 717" fill="none" stroke="#45638c" stroke-width="1.600" opacity="0.8"/>
<path d="M0 625 Q28 630 52 643 Q90 663 128 687 Q160 707 190 725" fill="none" stroke="#142238" stroke-width="3.500" opacity="0.6"/>
<path d="M300 640 Q360 628 400 612 Q440 594 480 580" fill="none" stroke="#14223a" stroke-width="3" opacity="0.6"/>
<path d="M392 640 Q430 612 470 592 Q480 586 487 576" fill="none" stroke="#5a7596" stroke-width="1.200" stroke-dasharray="2 1.500" opacity="0.9"/>
<path d="M480 570 Q490 576 492 588" fill="none" stroke="#5a7596" stroke-width="1.400" opacity="0.8"/>
</g>
<rect x="0" y="505" width="600" height="244" filter="url(#nzDenim)" clip-path="url(#cJeans)" opacity="0.13"/>
<!-- ===== boots ===== -->
<g filter="url(#b1)">
<path d="M26 749 Q30 726 44 718 Q70 716 100 722 Q150 730 196 749 Z" fill="#5e453a"/>
<path d="M60 749 Q90 730 130 736 Q160 742 180 749 Z" fill="#6e5144"/>
<path d="M26 749 Q30 726 44 718 L52 720 Q42 732 40 749 Z" fill="#8a8e98"/>
<path d="M428 749 L436 724 Q460 718 486 722 L488 749 Z" fill="#4a352d"/>
<rect x="484" y="712" width="3.500" height="37" fill="#6d7078"/>
</g>
<!-- ===== hand on knee ===== -->
<g filter="url(#b1)">
<path d="M240 652 Q246 634 262 626 Q282 620 300 622 Q322 626 344 630 Q366 632 384 638 Q402 644 418 652 Q430 658 432 664 Q430 672 420 672 Q404 670 388 664 Q378 662 370 662 Q384 676 400 686 Q414 694 426 702 Q430 708 426 712 Q416 714 404 708 Q392 702 380 698 Q394 708 406 718 Q410 724 406 728 Q398 730 388 724 Q372 716 358 710 Q366 720 370 728 Q370 734 362 734 Q352 732 342 722 Q324 708 304 698 Q282 690 262 682 Q246 672 240 652 Z" fill="url(#gHand)"/>
<path d="M372 662 Q352 656 336 660 M380 698 Q362 686 346 682 M358 710 Q344 700 330 696" fill="none" stroke="#b98464" stroke-width="1.400" opacity="0.7"/>
<ellipse cx="424.500" cy="664" rx="5" ry="4" fill="#f4dcd7"/>
<ellipse cx="420" cy="706.500" rx="5" ry="4" fill="#f4dcd7"/>
<ellipse cx="400" cy="723.500" rx="5" ry="4" fill="#f4dcd7"/>
<ellipse cx="364" cy="729.500" rx="4.500" ry="3.600" fill="#f4dcd7"/>
<path d="M356 660 Q360 668 358 678" fill="none" stroke="#dfe1e6" stroke-width="2.800"/>
<path d="M359.500 661 Q363 669 361.500 678" fill="none" stroke="#868992" stroke-width="0.900"/>
</g>
</g>
<rect x="0.500" y="0.500" width="599" height="748" fill="none" stroke="#8f8f8f" stroke-width="1.200"/>
</svg>
<div role="button" aria-label="Display">
<div class="b btn" style="left:2366.10px;top:1020.70px;width:165.50px;height:34.50px;"></div>
<div class="t" style="left:2410.87px;top:1023px;font-size:22.30px;letter-spacing:0.176px;color:#111111;">Display</div>
</div>
</section>
<footer>
<div role="button" aria-label="Print">
<div class="b btn" style="left:34.90px;top:1108.60px;width:165.10px;height:33.90px;"></div>
<div class="t" style="left:94.26px;top:1110px;font-size:22.30px;color:#111111;transform:scaleX(0.9758);">Print</div>
</div>
<div role="button" aria-label="Update Order">
<div class="b btn" style="left:223.20px;top:1108.60px;width:164.80px;height:33.90px;"></div>
<div class="t" style="left:240.25px;top:1110px;font-size:22.30px;color:#111111;transform:scaleX(0.9578);">Update Order</div>
</div>
<div role="button" aria-label="Close">
<div class="b btn" style="left:2399.80px;top:1106.80px;width:165.60px;height:34.20px;"></div>
<div class="t" style="left:2453.82px;top:1108px;font-size:22.30px;letter-spacing:0.103px;color:#111111;">Close</div>
</div>
</footer>
<svg style="left:0;top:0" width="2600" height="1164" viewBox="0 0 2600 1164"><path d="M1374.68 913.03 L1375.32 913.07 L1376.13 913.11 L1377.07 913.15 L1378.13 913.20 L1379.28 913.26 L1380.52 913.32 L1381.80 913.38 L1383.12 913.45 L1384.45 913.51 L1385.78 913.57 L1387.06 913.64 L1388.30 913.70 L1389.54 913.76 L1390.81 913.82 L1392.14 913.88 L1393.57 913.95 L1395.12 914.02 L1396.84 914.09 L1398.76 914.17 L1400.91 914.26 L1403.32 914.35 L1406.00 914.44 L1408.88 914.52 L1411.93 914.61 L1415.10 914.70 L1418.34 914.81 L1421.61 914.93 L1424.87 915.07 L1428.06 915.22 L1431.14 915.41 L1434.17 915.60 L1437.19 915.80 L1440.21 916.00 L1443.23 916.22 L1446.25 916.46 L1449.26 916.72 L1452.27 917.01 L1455.27 917.35 L1458.28 917.73 L1461.28 918.15 L1464.32 918.64 L1467.44 919.16 L1470.60 919.73 L1473.77 920.34 L1476.91 920.98 L1480.00 921.65 L1483.01 922.34 L1485.90 923.05 L1488.64 923.78 L1491.20 924.51 L1493.59 925.26 L1495.87 926.04 L1498.03 926.83 L1500.08 927.65 L1502.04 928.49 L1503.91 929.34 L1505.69 930.21 L1507.41 931.09 L1509.06 931.99 L1510.64 932.89 L1512.16 933.81 L1513.61 934.76 L1514.99 935.73 L1516.30 936.72 L1517.53 937.72 L1518.68 938.71 L1519.73 939.68 L1520.68 940.62 L1521.51 941.52 L1522.23 942.36 L1522.83 943.14 L1523.31 943.83 L1523.67 944.44 L1523.94 944.99 L1524.14 945.50 L1524.28 946.00 L1524.38 946.53 L1524.43 947.13 L1524.43 947.83 L1524.39 948.63 L1524.29 949.52 L1524.14 950.47 L1523.94 951.45 L1523.66 952.48 L1523.32 953.54 L1522.90 954.63 L1522.39 955.73 L1521.78 956.84 L1521.07 957.95 L1520.24 959.08 L1519.28 960.24 L1518.22 961.43 L1517.05 962.65 L1515.79 963.88 L1514.42 965.12 L1512.95 966.35 L1511.37 967.58 L1509.70 968.80 L1507.91 969.99 L1506.02 971.15 L1503.99 972.31 L1501.81 973.48 L1499.51 974.65 L1497.09 975.81 L1494.59 976.94 L1492.01 978.05 L1489.37 979.11 L1486.68 980.12 L1483.96 981.08 L1481.23 981.96 L1478.45 982.79 L1475.58 983.57 L1472.63 984.30 L1469.63 984.98 L1466.58 985.62 L1463.50 986.22 L1460.41 986.76 L1457.32 987.27 L1454.26 987.72 L1451.23 988.14 L1448.22 988.50 L1445.21 988.82 L1442.20 989.08 L1439.19 989.30 L1436.18 989.48 L1433.18 989.61 L1430.17 989.71 L1427.15 989.76 L1424.14 989.77 L1421.13 989.74 L1418.12 989.68 L1415.11 989.57 L1412.10 989.43 L1409.09 989.25 L1406.08 989.02 L1403.08 988.75 L1400.07 988.44 L1397.06 988.08 L1394.06 987.67 L1391.06 987.22 L1388.03 986.72 L1384.97 986.15 L1381.89 985.54 L1378.80 984.89 L1375.72 984.19 L1372.67 983.45 L1369.67 982.67 L1366.71 981.87 L1363.83 981.04 L1361.04 980.19 L1358.30 979.30 L1355.57 978.36 L1352.87 977.38 L1350.21 976.37 L1347.62 975.33 L1345.12 974.28 L1342.71 973.21 L1340.43 972.14 L1338.30 971.07 L1336.32 970.02 L1334.50 968.96 L1332.81 967.88 L1331.22 966.78 L1329.74 965.67 L1328.38 964.56 L1327.12 963.46 L1325.97 962.38 L1324.91 961.33 L1323.96 960.33 L1323.12 959.38 L1322.43 958.53 L1321.89 957.77 L1321.48 957.09 L1321.17 956.46 L1320.94 955.87 L1320.77 955.28 L1320.65 954.67 L1320.56 954.01 L1320.50 953.27 L1320.46 952.48 L1320.46 951.68 L1320.50 950.87 L1320.60 950.03 L1320.74 949.16 L1320.94 948.27 L1321.19 947.37 L1321.50 946.47 L1321.87 945.56 L1322.30 944.65 L1322.79 943.75 L1323.36 942.82 L1324.00 941.87 L1324.72 940.90 L1325.50 939.92 L1326.35 938.94 L1327.26 937.95 L1328.23 936.98 L1329.26 936.03 L1330.34 935.09 L1331.46 934.18 L1332.66 933.30 L1333.97 932.41 L1335.36 931.52 L1336.82 930.65 L1338.33 929.79 L1339.87 928.96 L1341.43 928.15 L1342.99 927.36 L1344.54 926.62 L1346.04 925.91 L1347.51 925.25 L1348.99 924.62 L1350.46 924.03 L1351.94 923.46 L1353.42 922.92 L1354.91 922.42 L1356.39 921.93 L1357.88 921.47 L1359.37 921.04 L1360.85 920.62 L1362.34 920.23 L1363.85 919.87 L1365.37 919.54 L1366.89 919.23 L1368.42 918.94 L1369.93 918.68 L1371.44 918.43 L1372.92 918.20 L1374.38 917.99 L1375.80 917.79 L1377.19 917.60 L1378.58 917.44 L1379.95 917.30 L1381.31 917.18 L1382.65 917.07 L1383.95 916.98 L1385.23 916.90 L1386.47 916.83 L1387.67 916.76 L1388.83 916.70 L1389.96 916.66 L1391.11 916.63 L1392.24 916.61 L1393.35 916.61 L1394.41 916.62 L1395.41 916.63 L1396.33 916.64 L1397.14 916.65 L1397.84 916.66 L1398.39 916.67 L1398.42 916.13 L1397.86 916.08 L1397.17 916.02 L1396.36 915.94 L1395.45 915.86 L1394.45 915.77 L1393.38 915.69 L1392.27 915.61 L1391.12 915.55 L1389.96 915.50 L1388.81 915.48 L1387.64 915.48 L1386.43 915.49 L1385.18 915.50 L1383.89 915.53 L1382.56 915.57 L1381.21 915.63 L1379.83 915.70 L1378.43 915.78 L1377.02 915.89 L1375.59 916.02 L1374.15 916.16 L1372.68 916.31 L1371.17 916.47 L1369.64 916.65 L1368.09 916.85 L1366.52 917.07 L1364.95 917.32 L1363.38 917.59 L1361.82 917.89 L1360.26 918.23 L1358.72 918.59 L1357.18 918.97 L1355.64 919.38 L1354.10 919.82 L1352.55 920.28 L1351.00 920.77 L1349.46 921.28 L1347.90 921.83 L1346.35 922.42 L1344.80 923.03 L1343.22 923.68 L1341.61 924.36 L1339.97 925.08 L1338.32 925.83 L1336.68 926.62 L1335.05 927.43 L1333.47 928.26 L1331.94 929.12 L1330.47 930.01 L1329.09 930.91 L1327.79 931.83 L1326.54 932.78 L1325.34 933.76 L1324.19 934.77 L1323.09 935.79 L1322.06 936.84 L1321.09 937.90 L1320.18 938.96 L1319.35 940.04 L1318.59 941.13 L1317.90 942.24 L1317.28 943.37 L1316.74 944.53 L1316.28 945.69 L1315.89 946.86 L1315.57 948.02 L1315.33 949.19 L1315.17 950.34 L1315.08 951.48 L1315.06 952.58 L1315.10 953.60 L1315.18 954.60 L1315.33 955.62 L1315.56 956.64 L1315.88 957.68 L1316.32 958.72 L1316.88 959.75 L1317.55 960.78 L1318.35 961.80 L1319.27 962.84 L1320.29 963.88 L1321.40 964.95 L1322.63 966.05 L1323.97 967.16 L1325.42 968.29 L1326.98 969.42 L1328.65 970.55 L1330.43 971.66 L1332.32 972.75 L1334.33 973.80 L1336.46 974.82 L1338.73 975.85 L1341.13 976.87 L1343.64 977.87 L1346.24 978.86 L1348.92 979.84 L1351.67 980.78 L1354.45 981.70 L1357.26 982.57 L1360.07 983.41 L1362.93 984.22 L1365.87 985.00 L1368.87 985.77 L1371.94 986.50 L1375.04 987.21 L1378.16 987.88 L1381.30 988.51 L1384.43 989.09 L1387.54 989.62 L1390.61 990.10 L1393.67 990.53 L1396.72 990.91 L1399.77 991.25 L1402.82 991.54 L1405.87 991.79 L1408.91 991.99 L1411.96 992.16 L1415.01 992.29 L1418.05 992.38 L1421.10 992.43 L1424.14 992.45 L1427.19 992.42 L1430.23 992.37 L1433.28 992.27 L1436.32 992.13 L1439.37 991.95 L1442.42 991.73 L1445.46 991.47 L1448.51 991.16 L1451.56 990.80 L1454.63 990.41 L1457.73 989.97 L1460.86 989.49 L1463.99 988.96 L1467.12 988.39 L1470.22 987.78 L1473.29 987.12 L1476.30 986.42 L1479.24 985.67 L1482.11 984.86 L1484.92 984.00 L1487.72 983.06 L1490.49 982.07 L1493.21 981.02 L1495.88 979.94 L1498.46 978.83 L1500.96 977.70 L1503.36 976.55 L1505.64 975.41 L1507.79 974.28 L1509.83 973.13 L1511.78 971.95 L1513.62 970.76 L1515.37 969.54 L1517.03 968.31 L1518.58 967.08 L1520.04 965.84 L1521.40 964.60 L1522.67 963.37 L1523.84 962.13 L1524.94 960.87 L1525.93 959.57 L1526.81 958.25 L1527.58 956.93 L1528.25 955.62 L1528.82 954.31 L1529.29 953.03 L1529.68 951.77 L1529.98 950.54 L1530.20 949.36 L1530.34 948.22 L1530.40 947.08 L1530.37 945.95 L1530.22 944.82 L1529.95 943.70 L1529.56 942.61 L1529.05 941.54 L1528.43 940.51 L1527.72 939.49 L1526.90 938.47 L1525.97 937.43 L1524.92 936.37 L1523.76 935.30 L1522.51 934.23 L1521.16 933.16 L1519.73 932.11 L1518.21 931.07 L1516.62 930.06 L1514.97 929.09 L1513.26 928.16 L1511.51 927.28 L1509.71 926.43 L1507.84 925.59 L1505.90 924.78 L1503.88 923.99 L1501.77 923.22 L1499.57 922.47 L1497.27 921.76 L1494.86 921.06 L1492.33 920.39 L1489.65 919.75 L1486.81 919.12 L1483.84 918.51 L1480.76 917.93 L1477.60 917.37 L1474.40 916.83 L1471.17 916.33 L1467.96 915.87 L1464.79 915.43 L1461.70 915.04 L1458.64 914.69 L1455.59 914.39 L1452.54 914.12 L1449.49 913.89 L1446.45 913.69 L1443.41 913.51 L1440.37 913.35 L1437.34 913.21 L1434.30 913.08 L1431.27 912.95 L1428.16 912.83 L1424.95 912.74 L1421.68 912.68 L1418.40 912.63 L1415.14 912.59 L1411.97 912.56 L1408.92 912.54 L1406.03 912.52 L1403.36 912.50 L1400.95 912.48 L1398.81 912.45 L1396.89 912.43 L1395.17 912.41 L1393.61 912.39 L1392.18 912.38 L1390.85 912.37 L1389.58 912.36 L1388.33 912.36 L1387.09 912.36 L1385.80 912.36 L1384.48 912.36 L1383.14 912.37 L1381.82 912.38 L1380.53 912.40 L1379.30 912.42 L1378.14 912.44 L1377.08 912.45 L1376.14 912.47 L1375.33 912.48 L1374.69 912.49 Z" fill="#f83e42"/></svg>
<svg style="left:0;top:0;filter:drop-shadow(0px 3px 2.4px rgba(0,0,0,0.55))" width="2600" height="1164" viewBox="0 0 2600 1164"><path d="M1639.90 900.30 L1683.00 878.40 L1674.90 892.80 L1802.00 892.80 A7.5 7.5 0 0 1 1802.00 907.80 L1674.90 907.80 L1683.00 922.20 Z" fill="#fb4043"/></svg>
<svg style="left:0;top:0;filter:drop-shadow(0px 3px 2.4px rgba(0,0,0,0.55))" width="2600" height="1164" viewBox="0 0 2600 1164"><path d="M1639.90 973.90 L1683.00 952.00 L1674.90 966.40 L1802.00 966.40 A7.5 7.5 0 0 1 1802.00 981.40 L1674.90 981.40 L1683.00 995.80 Z" fill="#fb4043"/></svg>
<svg style="left:0px;top:0px" width="17" height="17" viewBox="0 0 17 17"><g transform="rotate(0 8.5 8.5)"><path d="M0 0 L17 0 A17 17 0 0 0 0 17 Z" fill="#fdfdfd"/><path d="M17 0.600 A16.4 16.4 0 0 0 0.600 17" fill="none" stroke="#c4c4c4" stroke-width="1.2"/></g></svg>
<svg style="left:2583px;top:0px" width="17" height="17" viewBox="0 0 17 17"><g transform="rotate(90 8.5 8.5)"><path d="M0 0 L17 0 A17 17 0 0 0 0 17 Z" fill="#d2d2d2"/><path d="M17 0.600 A16.4 16.4 0 0 0 0.600 17" fill="none" stroke="#b0b0b0" stroke-width="1.2"/></g></svg>
<svg style="left:2583px;top:1147px" width="17" height="17" viewBox="0 0 17 17"><g transform="rotate(180 8.5 8.5)"><path d="M0 0 L17 0 A17 17 0 0 0 0 17 Z" fill="#b9b9b9"/><path d="M17 0.600 A16.4 16.4 0 0 0 0.600 17" fill="none" stroke="#fbfbfb" stroke-width="1.2"/></g></svg>
<svg style="left:0px;top:1147px" width="17" height="17" viewBox="0 0 17 17"><g transform="rotate(270 8.5 8.5)"><path d="M0 0 L17 0 A17 17 0 0 0 0 17 Z" fill="#1c1c1c"/><path d="M17 0.600 A16.4 16.4 0 0 0 0.600 17" fill="none" stroke="#f6f6f6" stroke-width="2.6"/></g></svg>
</div>
</body>
</html>
